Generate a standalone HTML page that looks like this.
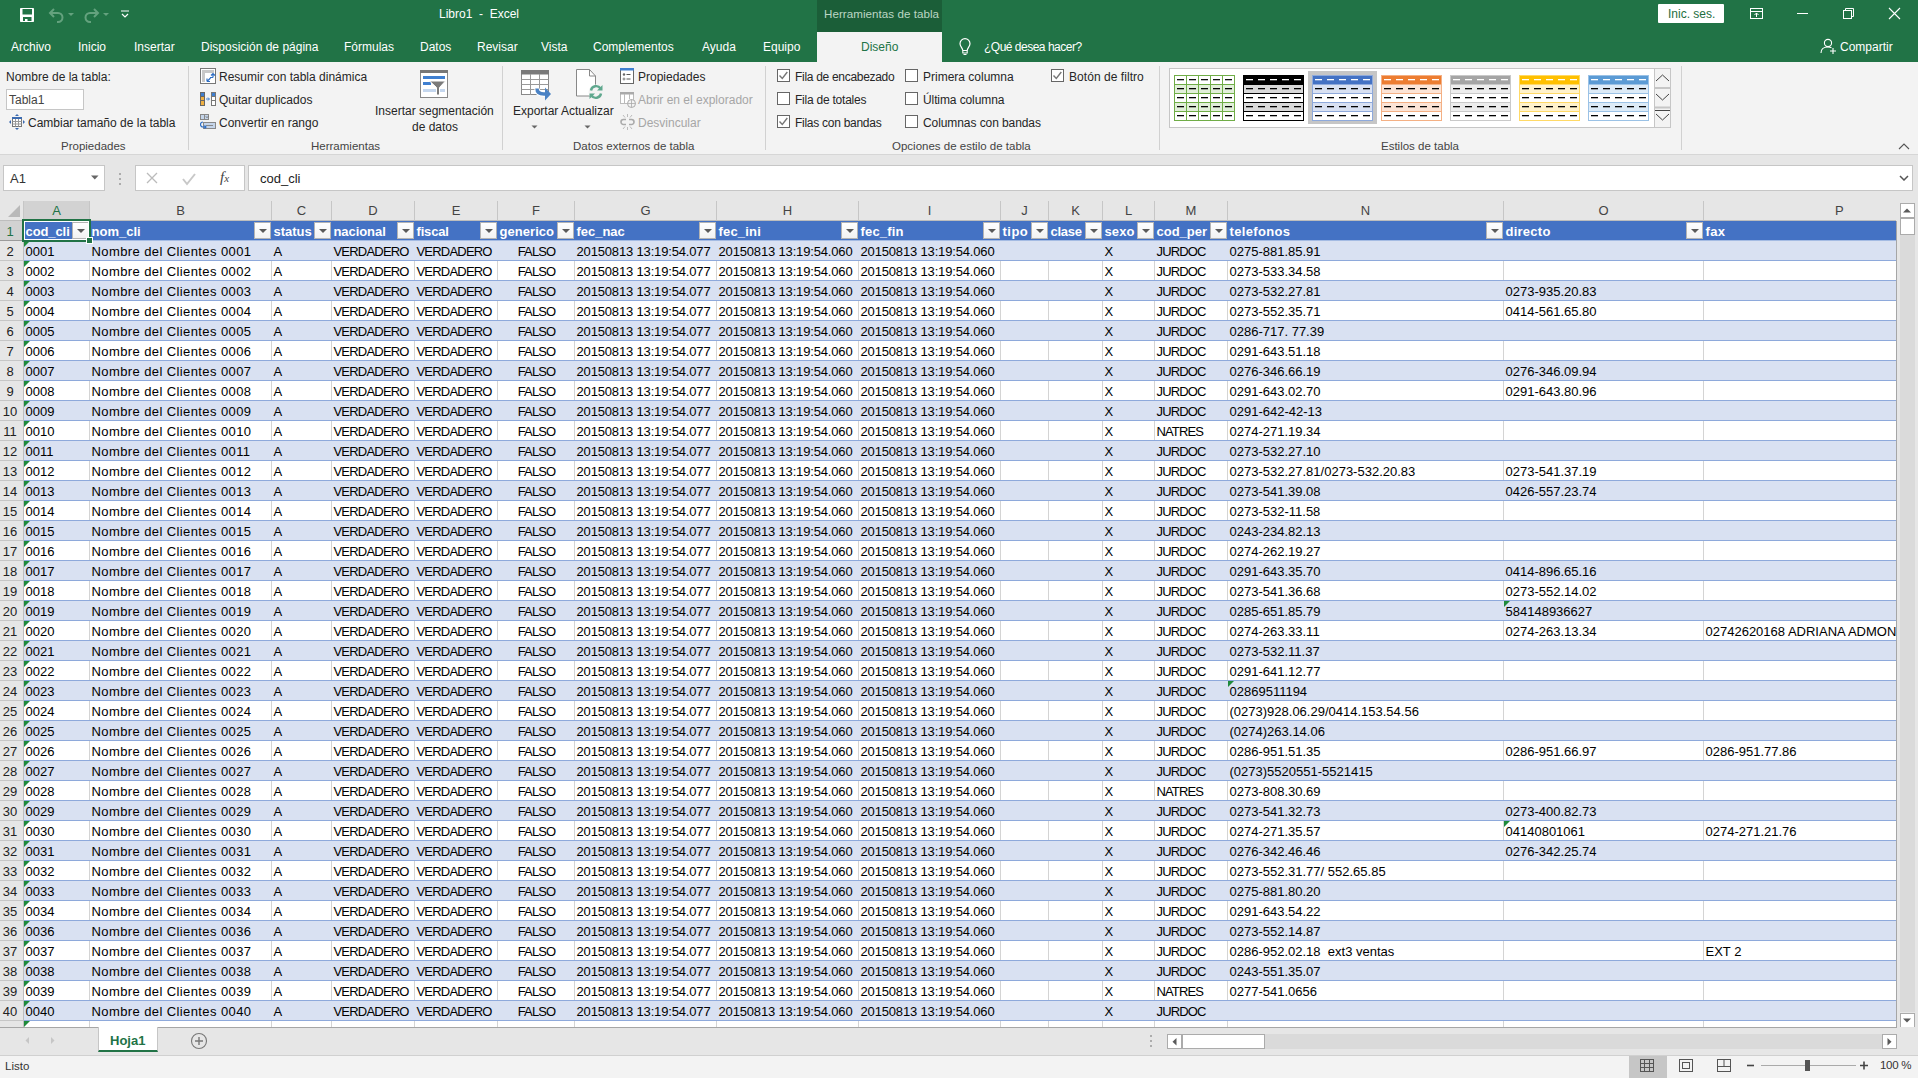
<!DOCTYPE html><html><head><meta charset="utf-8"><title>Libro1 - Excel</title><style>
*{box-sizing:border-box;margin:0;padding:0}
html,body{width:1918px;height:1078px;overflow:hidden;background:#fff;font-family:"Liberation Sans",sans-serif;position:relative}
.a{position:absolute;white-space:nowrap}
.t{font-size:12px;line-height:14px}
#title{left:0;top:0;width:1918px;height:62px;background:#217346}
.tab{color:#fff;top:40px}
#ribbon{left:0;top:62px;width:1918px;height:93px;background:#f3f3f3;border-bottom:1px solid #d6d6d6}
.rt{color:#262626}
.gl{color:#444;top:139px;font-size:11.5px}
.sep{width:1px;background:#d1d1d1;top:66px;height:84px}
#fbar{left:0;top:155px;width:1918px;height:46px;background:#e6e6e6}
#grid{left:0;top:201px;width:1918px;height:826px;background:#fff;overflow:hidden}
.ch{top:0;height:20px;background:#e6e6e6;border-right:1px solid #c6c6c6;color:#444;font-size:13px;line-height:20px;text-align:center;border-bottom:1px solid #bdbdbd}
.rh{left:0;width:24px;height:20px;background:#e6e6e6;border-bottom:1px solid #c6c6c6;border-right:1px solid #bdbdbd;color:#222;font-size:13px;line-height:22px;text-align:center;padding-right:3px}
.row{left:24px;width:1872px;height:20px;border-bottom:1px solid #8ea9db}
.b{background:#d9e1f2}
.w{background:#fff}
.gv{position:absolute;top:0;width:1px;height:19px;background:#d4d4d4}
.c{position:absolute;top:0;height:19px;font-size:13px;line-height:21px;color:#000;overflow:hidden;padding-left:1.5px}
.hd{background:#4472c4;border-bottom:1px solid #a4bbe3}
.hc{color:#fff;font-weight:bold}
.fb{position:absolute;top:1px;width:17px;height:17px;background:linear-gradient(#fff,#f2f2f2);border:1px solid #b4b4b4}
.fb:after{content:"";position:absolute;left:4px;top:6px;border-left:4px solid transparent;border-right:4px solid transparent;border-top:4px solid #5a5a5a}
.tri{position:absolute;left:0;top:0;width:0;height:0;border-top:6px solid #1f8a3b;border-right:6px solid transparent}
</style></head><body>
<div class="a" id="title"></div>
<div class="a" style="left:817px;top:0;width:125px;height:32px;background:#1b5e38"></div>
<div class="a t" style="left:824px;top:7px;color:#bcd6c4;font-size:11.6px;letter-spacing:0.05px">Herramientas de tabla</div>
<div class="a t" style="left:439px;top:7px;color:#fff">Libro1&nbsp; -&nbsp; Excel</div>
<svg class="a" style="left:20px;top:8px" width="14" height="14" viewBox="0 0 14 14"><rect x="0" y="0" width="14" height="14" rx="0.8" fill="#fff"/><rect x="2.5" y="1" width="9.5" height="5.5" fill="#217346"/><rect x="3" y="9" width="8.5" height="4" fill="#217346"/><rect x="5" y="11" width="2.5" height="2" fill="#fff"/></svg>
<svg class="a" style="left:48px;top:7px" width="36" height="16" viewBox="0 0 36 16"><path d="M3 6h7a4.5 4.5 0 0 1 0 9h-1" fill="none" stroke="#64a27e" stroke-width="2"/><path d="M6 2L2 6l4 4" stroke="#64a27e" stroke-width="2" fill="none"/><path d="M20 6l3 3 3-3z" fill="#64a27e"/></svg>
<svg class="a" style="left:83px;top:7px" width="36" height="16" viewBox="0 0 36 16"><path d="M14 6H7a4.5 4.5 0 0 0 0 9h1" fill="none" stroke="#64a27e" stroke-width="2"/><path d="M11 2l4 4-4 4" stroke="#64a27e" stroke-width="2" fill="none"/><path d="M20 6l3 3 3-3z" fill="#64a27e"/></svg>
<svg class="a" style="left:119px;top:8px" width="12" height="12" viewBox="0 0 12 12"><path d="M2 3h8" stroke="#fff" stroke-width="1"/><path d="M3 6l3 3 3-3" stroke="#fff" stroke-width="1.2" fill="none"/></svg>
<div class="a" style="left:1658px;top:4px;width:66px;height:19px;background:#fff;border-radius:1px"></div>
<div class="a t" style="left:1668px;top:7px;color:#1e6e40;font-size:12px">Inic. ses.</div>
<svg class="a" style="left:1748px;top:5px" width="170" height="18" viewBox="0 0 170 18"><rect x="2.5" y="3.5" width="12" height="10" fill="none" stroke="#fff"/><path d="M2.5 6.5h12" stroke="#fff"/><path d="M8.5 12V8M6.5 10l2-2 2 2" stroke="#fff" fill="none"/><path d="M49 8.5h11" stroke="#fff"/><rect x="95.5" y="5.5" width="8" height="8" fill="none" stroke="#fff"/><path d="M97.5 5.5v-2h8v8h-2" fill="none" stroke="#fff"/><path d="M141 3l11 11M152 3l-11 11" stroke="#fff" stroke-width="1.1"/></svg>
<div class="a t tab" style="left:11px">Archivo</div>
<div class="a t tab" style="left:78px">Inicio</div>
<div class="a t tab" style="left:134px">Insertar</div>
<div class="a t tab" style="left:201px">Disposición de página</div>
<div class="a t tab" style="left:344px">Fórmulas</div>
<div class="a t tab" style="left:420px">Datos</div>
<div class="a t tab" style="left:477px">Revisar</div>
<div class="a t tab" style="left:541px">Vista</div>
<div class="a t tab" style="left:593px">Complementos</div>
<div class="a t tab" style="left:702px">Ayuda</div>
<div class="a t tab" style="left:763px">Equipo</div>
<div class="a" style="left:817px;top:32px;width:125px;height:31px;background:#f3f3f3"></div>
<div class="a t" style="left:861px;top:40px;color:#217346">Diseño</div>
<svg class="a" style="left:957px;top:38px" width="16" height="18" viewBox="0 0 16 18"><path d="M5.8 12.5c0-2.5-2.8-4-2.8-6.8a5 5 0 0 1 10 0c0 2.8-2.8 4.3-2.8 6.8z" fill="none" stroke="#fff" stroke-width="1.2"/><path d="M5.8 13v2h4.4v-2M6.5 16.5h3" stroke="#fff" fill="none" stroke-width="1.1"/></svg>
<div class="a t tab" style="left:984px;letter-spacing:-0.5px">¿Qué desea hacer?</div>
<svg class="a" style="left:1820px;top:38px" width="18" height="16" viewBox="0 0 18 16"><circle cx="8" cy="5" r="3.6" fill="none" stroke="#fff" stroke-width="1.1"/><path d="M1 15c0-4 3-6 7-6 1.5 0 2.5 0.3 3.5 0.8" fill="none" stroke="#fff" stroke-width="1.1"/><path d="M13 10v6M10 13h6" stroke="#fff" stroke-width="1.1"/></svg>
<div class="a t tab" style="left:1840px">Compartir</div>
<div class="a" id="ribbon"></div>
<div class="a t rt" style="left:6px;top:70px">Nombre de la tabla:</div>
<div class="a" style="left:6px;top:89px;width:78px;height:21px;background:#fff;border:1px solid #c6c6c6"></div>
<div class="a t" style="left:9px;top:93px;color:#444">Tabla1</div>
<svg class="a" style="left:9px;top:114px" width="16" height="16" viewBox="0 0 16 16"><rect x="3.5" y="3.5" width="9" height="9" fill="#fff" stroke="#777"/><rect x="3" y="3" width="10" height="2" fill="#3c6bb0"/><path d="M3.5 7.5h9M3.5 10h9M6.5 5v7.5M9.5 5v7.5" stroke="#999"/><path d="M8 0l-2 2h4zM8 16l-2-2h4zM0 8l2-2v4zM16 8l-2-2v4z" fill="#3c6bb0"/></svg>
<div class="a t rt" style="left:28px;top:116px">Cambiar tamaño de la tabla</div>
<div class="a t gl" style="left:61px">Propiedades</div>
<div class="a sep" style="left:188px"></div>
<svg class="a" style="left:200px;top:68px" width="16" height="16" viewBox="0 0 16 16"><rect x="0.5" y="0.5" width="15" height="15" fill="#fff" stroke="#777"/><rect x="2" y="2" width="12" height="3" fill="#c8c8c8"/><rect x="2" y="2" width="3" height="12" fill="#c8c8c8"/><path d="M7 13.5h3M7 13.5v-3M7.5 13l3-3M13 5.5v4M11 7.5l2-2 2 2M10 9.5h3" stroke="#2f6fc4" stroke-width="1.2" fill="none"/></svg>
<div class="a t rt" style="left:219px;top:70px">Resumir con tabla dinámica</div>
<svg class="a" style="left:200px;top:92px" width="16" height="14" viewBox="0 0 16 14"><rect x="0" y="0" width="5" height="14" fill="#666"/><rect x="1" y="1" width="3" height="3" fill="#3f7fd0"/><rect x="1" y="5" width="3" height="3" fill="#f0b041"/><rect x="1" y="9" width="3" height="4" fill="#f0b041"/><rect x="11" y="0" width="5" height="14" fill="#777"/><rect x="12" y="1" width="3" height="3" fill="#3f7fd0"/><rect x="12" y="5" width="3" height="3" fill="#fff"/><rect x="12" y="9" width="3" height="4" fill="#fff"/><path d="M6 7h3M8 5.5l1.5 1.5L8 8.5" stroke="#3f7fd0" fill="none"/></svg>
<div class="a t rt" style="left:219px;top:93px">Quitar duplicados</div>
<svg class="a" style="left:200px;top:114px" width="16" height="16" viewBox="0 0 16 16"><rect x="0.5" y="0.5" width="8" height="5" fill="#c5d5ea" stroke="#888"/><path d="M4.5 0.5v5" stroke="#888"/><path d="M6 2.5l1 1 1-1" stroke="#555" fill="none"/><rect x="3.5" y="8.5" width="12" height="6" fill="#c5d5ea" stroke="#888"/><path d="M6 11.5h7" stroke="#888"/><path d="M3 8a2.5 2.5 0 0 0 0 5h3M4.5 11.5l1.5 1.5-1.5 1.5" stroke="#2f6fc4" stroke-width="1.2" fill="none"/></svg>
<div class="a t rt" style="left:219px;top:116px">Convertir en rango</div>
<svg class="a" style="left:420px;top:70px" width="28" height="28" viewBox="0 0 28 28"><rect x="0.5" y="0.5" width="27" height="27" fill="#fff" stroke="#888"/><rect x="0" y="0" width="28" height="3" fill="#777"/><rect x="3" y="6" width="22" height="3" fill="#3f7fd0"/><rect x="3" y="12" width="8" height="3" fill="#3f7fd0"/><rect x="3" y="19" width="22" height="3" fill="#c5d7ee"/><path d="M9.5 11h16l-6 6.5v7.5h-3v-7.5z" fill="#7a7a7a" stroke="#fff" stroke-width="1"/></svg>
<div class="a t rt" style="left:375px;top:104px">Insertar segmentación</div>
<div class="a t rt" style="left:412px;top:120px">de datos</div>
<div class="a t gl" style="left:311px">Herramientas</div>
<div class="a sep" style="left:502px"></div>
<svg class="a" style="left:520px;top:69px" width="34" height="34" viewBox="0 0 34 34"><rect x="1.5" y="1.5" width="27" height="24" fill="#fff" stroke="#888"/><rect x="1" y="1" width="28" height="4.5" fill="#7a7a7a"/><path d="M1.5 10.5h27M1.5 15.5h27M1.5 20.5h27M10.5 5v21M19.5 5v21" stroke="#999"/><path d="M17 19.5q0 5.5 7 5.5h2" stroke="#fff" stroke-width="5.5" fill="none"/><path d="M17 19.5q0 5.5 7 5.5h2" stroke="#4a82c4" stroke-width="3.5" fill="none"/><path d="M25 18.5l6 6.5-6 6.5z" fill="#4a82c4"/></svg>
<div class="a t rt" style="left:513px;top:104px">Exportar</div>
<svg class="a" style="left:531px;top:125px" width="7" height="4"><path d="M0.5 0.5h6L3.5 3.5z" fill="#666"/></svg>
<svg class="a" style="left:575px;top:68px" width="30" height="32" viewBox="0 0 30 32"><path d="M1.5 1.5h13l6 6.5v20h-19z" fill="#fff" stroke="#888"/><path d="M14.5 1.5v6.5h6" fill="none" stroke="#888"/><circle cx="21" cy="24" r="7.5" fill="#f3f3f3"/><path d="M16 22.5a5.2 5.2 0 0 1 9.5-2M26 25.5a5.2 5.2 0 0 1-9.5 2" stroke="#5fa88e" stroke-width="2.4" fill="none"/><path d="M27.5 17v5.5h-5.5zM14.5 31v-5.5h5.5z" fill="#5fa88e"/></svg>
<div class="a t rt" style="left:561px;top:104px">Actualizar</div>
<svg class="a" style="left:584px;top:125px" width="7" height="4"><path d="M0.5 0.5h6L3.5 3.5z" fill="#666"/></svg>
<svg class="a" style="left:620px;top:68px" width="14" height="16" viewBox="0 0 14 16"><rect x="0.5" y="0.5" width="13" height="15" fill="#fff" stroke="#666"/><rect x="0" y="0" width="14" height="2.5" fill="#3f7fd0"/><circle cx="4" cy="6.5" r="1.2" fill="#666"/><circle cx="4" cy="11" r="1" fill="none" stroke="#666" stroke-width="0.8"/><path d="M6.5 6.5h4M6.5 11h4" stroke="#555"/></svg>
<div class="a t rt" style="left:638px;top:70px">Propiedades</div>
<svg class="a" style="left:620px;top:92px" width="16" height="16" viewBox="0 0 16 16"><rect x="0.5" y="0.5" width="13" height="11" fill="#fff" stroke="#bbb"/><rect x="0" y="0" width="14" height="2.5" fill="#aaa"/><path d="M4.5 2v10M9.5 2v5" stroke="#bbb"/><circle cx="11.5" cy="11.5" r="4" fill="#f3f3f3" stroke="#aaa"/><path d="M7.5 11.5h8M11.5 7.5v8" stroke="#aaa" stroke-width="0.8"/></svg>
<div class="a t" style="left:638px;top:93px;color:#a6a6a6">Abrir en el explorador</div>
<svg class="a" style="left:620px;top:114px" width="16" height="16" viewBox="0 0 16 16"><path d="M6 5.5H3.5a2.5 2.5 0 0 0 0 5H6M9 5.5h2.5a2.5 2.5 0 0 1 0 5H9" stroke="#aaa" stroke-width="1.6" fill="none"/><path d="M7.5 0v3M7.5 13v3M3 1l2 2.5M12 1l-2 2.5M3 15l2-2.5M12 15l-2-2.5" stroke="#bbb"/></svg>
<div class="a t" style="left:638px;top:116px;color:#a6a6a6">Desvincular</div>
<div class="a t gl" style="left:573px">Datos externos de tabla</div>
<div class="a sep" style="left:765px"></div>
<svg class="a" style="left:777px;top:69px" width="13" height="13" viewBox="0 0 13 13"><rect x="0.5" y="0.5" width="12" height="12" fill="#fff" stroke="#666"/><path d="M2.5 6.5l2.8 3 5-6.5" stroke="#777" stroke-width="1.4" fill="none"/></svg>
<div class="a t rt" style="left:795px;top:70px;letter-spacing:-0.3px">Fila de encabezado</div>
<svg class="a" style="left:777px;top:92px" width="13" height="13" viewBox="0 0 13 13"><rect x="0.5" y="0.5" width="12" height="12" fill="#fff" stroke="#666"/></svg>
<div class="a t rt" style="left:795px;top:93px;letter-spacing:-0.23px">Fila de totales</div>
<svg class="a" style="left:777px;top:115px" width="13" height="13" viewBox="0 0 13 13"><rect x="0.5" y="0.5" width="12" height="12" fill="#fff" stroke="#666"/><path d="M2.5 6.5l2.8 3 5-6.5" stroke="#777" stroke-width="1.4" fill="none"/></svg>
<div class="a t rt" style="left:795px;top:116px;letter-spacing:-0.27px">Filas con bandas</div>
<svg class="a" style="left:905px;top:69px" width="13" height="13" viewBox="0 0 13 13"><rect x="0.5" y="0.5" width="12" height="12" fill="#fff" stroke="#666"/></svg>
<div class="a t rt" style="left:923px;top:70px;letter-spacing:0px">Primera columna</div>
<svg class="a" style="left:905px;top:92px" width="13" height="13" viewBox="0 0 13 13"><rect x="0.5" y="0.5" width="12" height="12" fill="#fff" stroke="#666"/></svg>
<div class="a t rt" style="left:923px;top:93px;letter-spacing:-0.1px">Última columna</div>
<svg class="a" style="left:905px;top:115px" width="13" height="13" viewBox="0 0 13 13"><rect x="0.5" y="0.5" width="12" height="12" fill="#fff" stroke="#666"/></svg>
<div class="a t rt" style="left:923px;top:116px;letter-spacing:-0.08px">Columnas con bandas</div>
<svg class="a" style="left:1051px;top:69px" width="13" height="13" viewBox="0 0 13 13"><rect x="0.5" y="0.5" width="12" height="12" fill="#fff" stroke="#666"/><path d="M2.5 6.5l2.8 3 5-6.5" stroke="#777" stroke-width="1.4" fill="none"/></svg>
<div class="a t rt" style="left:1069px;top:70px;letter-spacing:0.05px">Botón de filtro</div>
<div class="a t gl" style="left:892px">Opciones de estilo de tabla</div>
<div class="a sep" style="left:1159px"></div>
<div class="a" style="left:1169px;top:68px;width:486px;height:60px;background:#fff;border:1px solid #c6c6c6"></div>
<div class="a" style="left:1308px;top:71px;width:69px;height:53px;background:#c6c6c6"></div>
<svg class="a" style="left:1174px;top:75px" width="62" height="46" viewBox="0 0 62 46"><rect x="0" y="0" width="61" height="46" fill="#fff"/><rect x="0" y="0" width="61" height="10" fill="#fff"/><path d="M0 0.5h61" stroke="#70ad47"/><rect x="3" y="4" width="7" height="1.3" fill="#111"/><rect x="15" y="4" width="7" height="1.3" fill="#111"/><rect x="27" y="4" width="7" height="1.3" fill="#111"/><rect x="39" y="4" width="7" height="1.3" fill="#111"/><rect x="51" y="4" width="7" height="1.3" fill="#111"/><rect x="0" y="9" width="61" height="10" fill="#e2efda"/><path d="M0 9.5h61" stroke="#70ad47"/><rect x="3" y="13" width="7" height="1.3" fill="#000"/><rect x="15" y="13" width="7" height="1.3" fill="#000"/><rect x="27" y="13" width="7" height="1.3" fill="#000"/><rect x="39" y="13" width="7" height="1.3" fill="#000"/><rect x="51" y="13" width="7" height="1.3" fill="#000"/><rect x="0" y="18" width="61" height="10" fill="#fff"/><path d="M0 18.5h61" stroke="#70ad47"/><rect x="3" y="22" width="7" height="1.3" fill="#000"/><rect x="15" y="22" width="7" height="1.3" fill="#000"/><rect x="27" y="22" width="7" height="1.3" fill="#000"/><rect x="39" y="22" width="7" height="1.3" fill="#000"/><rect x="51" y="22" width="7" height="1.3" fill="#000"/><rect x="0" y="27" width="61" height="10" fill="#e2efda"/><path d="M0 27.5h61" stroke="#70ad47"/><rect x="3" y="31" width="7" height="1.3" fill="#000"/><rect x="15" y="31" width="7" height="1.3" fill="#000"/><rect x="27" y="31" width="7" height="1.3" fill="#000"/><rect x="39" y="31" width="7" height="1.3" fill="#000"/><rect x="51" y="31" width="7" height="1.3" fill="#000"/><rect x="0" y="36" width="61" height="10" fill="#fff"/><path d="M0 36.5h61" stroke="#70ad47"/><rect x="3" y="40" width="7" height="1.3" fill="#000"/><rect x="15" y="40" width="7" height="1.3" fill="#000"/><rect x="27" y="40" width="7" height="1.3" fill="#000"/><rect x="39" y="40" width="7" height="1.3" fill="#000"/><rect x="51" y="40" width="7" height="1.3" fill="#000"/><path d="M12.5 0v45" stroke="#70ad47"/><path d="M24.5 0v45" stroke="#70ad47"/><path d="M36.5 0v45" stroke="#70ad47"/><path d="M48.5 0v45" stroke="#70ad47"/><rect x="0.5" y="0.5" width="60" height="45" fill="none" stroke="#70ad47"/></svg>
<svg class="a" style="left:1243px;top:75px" width="62" height="46" viewBox="0 0 62 46"><rect x="0" y="0" width="61" height="46" fill="#fff"/><rect x="0" y="0" width="61" height="10" fill="#000"/><path d="M0 0.5h61" stroke="#000"/><rect x="3" y="4" width="7" height="1.3" fill="#fff"/><rect x="15" y="4" width="7" height="1.3" fill="#fff"/><rect x="27" y="4" width="7" height="1.3" fill="#fff"/><rect x="39" y="4" width="7" height="1.3" fill="#fff"/><rect x="51" y="4" width="7" height="1.3" fill="#fff"/><rect x="0" y="9" width="61" height="10" fill="#d9d9d9"/><path d="M0 9.5h61" stroke="#000"/><rect x="3" y="13" width="7" height="1.3" fill="#000"/><rect x="15" y="13" width="7" height="1.3" fill="#000"/><rect x="27" y="13" width="7" height="1.3" fill="#000"/><rect x="39" y="13" width="7" height="1.3" fill="#000"/><rect x="51" y="13" width="7" height="1.3" fill="#000"/><rect x="0" y="18" width="61" height="10" fill="#fff"/><path d="M0 18.5h61" stroke="#000"/><rect x="3" y="22" width="7" height="1.3" fill="#000"/><rect x="15" y="22" width="7" height="1.3" fill="#000"/><rect x="27" y="22" width="7" height="1.3" fill="#000"/><rect x="39" y="22" width="7" height="1.3" fill="#000"/><rect x="51" y="22" width="7" height="1.3" fill="#000"/><rect x="0" y="27" width="61" height="10" fill="#d9d9d9"/><path d="M0 27.5h61" stroke="#000"/><rect x="3" y="31" width="7" height="1.3" fill="#000"/><rect x="15" y="31" width="7" height="1.3" fill="#000"/><rect x="27" y="31" width="7" height="1.3" fill="#000"/><rect x="39" y="31" width="7" height="1.3" fill="#000"/><rect x="51" y="31" width="7" height="1.3" fill="#000"/><rect x="0" y="36" width="61" height="10" fill="#fff"/><path d="M0 36.5h61" stroke="#000"/><rect x="3" y="40" width="7" height="1.3" fill="#000"/><rect x="15" y="40" width="7" height="1.3" fill="#000"/><rect x="27" y="40" width="7" height="1.3" fill="#000"/><rect x="39" y="40" width="7" height="1.3" fill="#000"/><rect x="51" y="40" width="7" height="1.3" fill="#000"/><rect x="0.5" y="0.5" width="60" height="45" fill="none" stroke="#000"/></svg>
<svg class="a" style="left:1312px;top:75px" width="62" height="46" viewBox="0 0 62 46"><rect x="0" y="0" width="61" height="46" fill="#fff"/><rect x="0" y="0" width="61" height="10" fill="#4472c4"/><path d="M0 0.5h61" stroke="#8ea9db"/><rect x="3" y="4" width="7" height="1.3" fill="#fff"/><rect x="15" y="4" width="7" height="1.3" fill="#fff"/><rect x="27" y="4" width="7" height="1.3" fill="#fff"/><rect x="39" y="4" width="7" height="1.3" fill="#fff"/><rect x="51" y="4" width="7" height="1.3" fill="#fff"/><rect x="0" y="9" width="61" height="10" fill="#d9e1f2"/><path d="M0 9.5h61" stroke="#8ea9db"/><rect x="3" y="13" width="7" height="1.3" fill="#000"/><rect x="15" y="13" width="7" height="1.3" fill="#000"/><rect x="27" y="13" width="7" height="1.3" fill="#000"/><rect x="39" y="13" width="7" height="1.3" fill="#000"/><rect x="51" y="13" width="7" height="1.3" fill="#000"/><rect x="0" y="18" width="61" height="10" fill="#fff"/><path d="M0 18.5h61" stroke="#8ea9db"/><rect x="3" y="22" width="7" height="1.3" fill="#000"/><rect x="15" y="22" width="7" height="1.3" fill="#000"/><rect x="27" y="22" width="7" height="1.3" fill="#000"/><rect x="39" y="22" width="7" height="1.3" fill="#000"/><rect x="51" y="22" width="7" height="1.3" fill="#000"/><rect x="0" y="27" width="61" height="10" fill="#d9e1f2"/><path d="M0 27.5h61" stroke="#8ea9db"/><rect x="3" y="31" width="7" height="1.3" fill="#000"/><rect x="15" y="31" width="7" height="1.3" fill="#000"/><rect x="27" y="31" width="7" height="1.3" fill="#000"/><rect x="39" y="31" width="7" height="1.3" fill="#000"/><rect x="51" y="31" width="7" height="1.3" fill="#000"/><rect x="0" y="36" width="61" height="10" fill="#fff"/><path d="M0 36.5h61" stroke="#8ea9db"/><rect x="3" y="40" width="7" height="1.3" fill="#000"/><rect x="15" y="40" width="7" height="1.3" fill="#000"/><rect x="27" y="40" width="7" height="1.3" fill="#000"/><rect x="39" y="40" width="7" height="1.3" fill="#000"/><rect x="51" y="40" width="7" height="1.3" fill="#000"/><rect x="0.5" y="0.5" width="60" height="45" fill="none" stroke="#8ea9db"/></svg>
<svg class="a" style="left:1381px;top:75px" width="62" height="46" viewBox="0 0 62 46"><rect x="0" y="0" width="61" height="46" fill="#fff"/><rect x="0" y="0" width="61" height="10" fill="#ed7d31"/><path d="M0 0.5h61" stroke="#f4b084"/><rect x="3" y="4" width="7" height="1.3" fill="#fff"/><rect x="15" y="4" width="7" height="1.3" fill="#fff"/><rect x="27" y="4" width="7" height="1.3" fill="#fff"/><rect x="39" y="4" width="7" height="1.3" fill="#fff"/><rect x="51" y="4" width="7" height="1.3" fill="#fff"/><rect x="0" y="9" width="61" height="10" fill="#fce4d6"/><path d="M0 9.5h61" stroke="#f4b084"/><rect x="3" y="13" width="7" height="1.3" fill="#000"/><rect x="15" y="13" width="7" height="1.3" fill="#000"/><rect x="27" y="13" width="7" height="1.3" fill="#000"/><rect x="39" y="13" width="7" height="1.3" fill="#000"/><rect x="51" y="13" width="7" height="1.3" fill="#000"/><rect x="0" y="18" width="61" height="10" fill="#fff"/><path d="M0 18.5h61" stroke="#f4b084"/><rect x="3" y="22" width="7" height="1.3" fill="#000"/><rect x="15" y="22" width="7" height="1.3" fill="#000"/><rect x="27" y="22" width="7" height="1.3" fill="#000"/><rect x="39" y="22" width="7" height="1.3" fill="#000"/><rect x="51" y="22" width="7" height="1.3" fill="#000"/><rect x="0" y="27" width="61" height="10" fill="#fce4d6"/><path d="M0 27.5h61" stroke="#f4b084"/><rect x="3" y="31" width="7" height="1.3" fill="#000"/><rect x="15" y="31" width="7" height="1.3" fill="#000"/><rect x="27" y="31" width="7" height="1.3" fill="#000"/><rect x="39" y="31" width="7" height="1.3" fill="#000"/><rect x="51" y="31" width="7" height="1.3" fill="#000"/><rect x="0" y="36" width="61" height="10" fill="#fff"/><path d="M0 36.5h61" stroke="#f4b084"/><rect x="3" y="40" width="7" height="1.3" fill="#000"/><rect x="15" y="40" width="7" height="1.3" fill="#000"/><rect x="27" y="40" width="7" height="1.3" fill="#000"/><rect x="39" y="40" width="7" height="1.3" fill="#000"/><rect x="51" y="40" width="7" height="1.3" fill="#000"/><rect x="0.5" y="0.5" width="60" height="45" fill="none" stroke="#f4b084"/></svg>
<svg class="a" style="left:1450px;top:75px" width="62" height="46" viewBox="0 0 62 46"><rect x="0" y="0" width="61" height="46" fill="#fff"/><rect x="0" y="0" width="61" height="10" fill="#a5a5a5"/><path d="M0 0.5h61" stroke="#c9c9c9"/><rect x="3" y="4" width="7" height="1.3" fill="#fff"/><rect x="15" y="4" width="7" height="1.3" fill="#fff"/><rect x="27" y="4" width="7" height="1.3" fill="#fff"/><rect x="39" y="4" width="7" height="1.3" fill="#fff"/><rect x="51" y="4" width="7" height="1.3" fill="#fff"/><rect x="0" y="9" width="61" height="10" fill="#ededed"/><path d="M0 9.5h61" stroke="#c9c9c9"/><rect x="3" y="13" width="7" height="1.3" fill="#000"/><rect x="15" y="13" width="7" height="1.3" fill="#000"/><rect x="27" y="13" width="7" height="1.3" fill="#000"/><rect x="39" y="13" width="7" height="1.3" fill="#000"/><rect x="51" y="13" width="7" height="1.3" fill="#000"/><rect x="0" y="18" width="61" height="10" fill="#fff"/><path d="M0 18.5h61" stroke="#c9c9c9"/><rect x="3" y="22" width="7" height="1.3" fill="#000"/><rect x="15" y="22" width="7" height="1.3" fill="#000"/><rect x="27" y="22" width="7" height="1.3" fill="#000"/><rect x="39" y="22" width="7" height="1.3" fill="#000"/><rect x="51" y="22" width="7" height="1.3" fill="#000"/><rect x="0" y="27" width="61" height="10" fill="#ededed"/><path d="M0 27.5h61" stroke="#c9c9c9"/><rect x="3" y="31" width="7" height="1.3" fill="#000"/><rect x="15" y="31" width="7" height="1.3" fill="#000"/><rect x="27" y="31" width="7" height="1.3" fill="#000"/><rect x="39" y="31" width="7" height="1.3" fill="#000"/><rect x="51" y="31" width="7" height="1.3" fill="#000"/><rect x="0" y="36" width="61" height="10" fill="#fff"/><path d="M0 36.5h61" stroke="#c9c9c9"/><rect x="3" y="40" width="7" height="1.3" fill="#000"/><rect x="15" y="40" width="7" height="1.3" fill="#000"/><rect x="27" y="40" width="7" height="1.3" fill="#000"/><rect x="39" y="40" width="7" height="1.3" fill="#000"/><rect x="51" y="40" width="7" height="1.3" fill="#000"/><rect x="0.5" y="0.5" width="60" height="45" fill="none" stroke="#c9c9c9"/></svg>
<svg class="a" style="left:1519px;top:75px" width="62" height="46" viewBox="0 0 62 46"><rect x="0" y="0" width="61" height="46" fill="#fff"/><rect x="0" y="0" width="61" height="10" fill="#ffc000"/><path d="M0 0.5h61" stroke="#ffd966"/><rect x="3" y="4" width="7" height="1.3" fill="#fff"/><rect x="15" y="4" width="7" height="1.3" fill="#fff"/><rect x="27" y="4" width="7" height="1.3" fill="#fff"/><rect x="39" y="4" width="7" height="1.3" fill="#fff"/><rect x="51" y="4" width="7" height="1.3" fill="#fff"/><rect x="0" y="9" width="61" height="10" fill="#fff2cc"/><path d="M0 9.5h61" stroke="#ffd966"/><rect x="3" y="13" width="7" height="1.3" fill="#000"/><rect x="15" y="13" width="7" height="1.3" fill="#000"/><rect x="27" y="13" width="7" height="1.3" fill="#000"/><rect x="39" y="13" width="7" height="1.3" fill="#000"/><rect x="51" y="13" width="7" height="1.3" fill="#000"/><rect x="0" y="18" width="61" height="10" fill="#fff"/><path d="M0 18.5h61" stroke="#ffd966"/><rect x="3" y="22" width="7" height="1.3" fill="#000"/><rect x="15" y="22" width="7" height="1.3" fill="#000"/><rect x="27" y="22" width="7" height="1.3" fill="#000"/><rect x="39" y="22" width="7" height="1.3" fill="#000"/><rect x="51" y="22" width="7" height="1.3" fill="#000"/><rect x="0" y="27" width="61" height="10" fill="#fff2cc"/><path d="M0 27.5h61" stroke="#ffd966"/><rect x="3" y="31" width="7" height="1.3" fill="#000"/><rect x="15" y="31" width="7" height="1.3" fill="#000"/><rect x="27" y="31" width="7" height="1.3" fill="#000"/><rect x="39" y="31" width="7" height="1.3" fill="#000"/><rect x="51" y="31" width="7" height="1.3" fill="#000"/><rect x="0" y="36" width="61" height="10" fill="#fff"/><path d="M0 36.5h61" stroke="#ffd966"/><rect x="3" y="40" width="7" height="1.3" fill="#000"/><rect x="15" y="40" width="7" height="1.3" fill="#000"/><rect x="27" y="40" width="7" height="1.3" fill="#000"/><rect x="39" y="40" width="7" height="1.3" fill="#000"/><rect x="51" y="40" width="7" height="1.3" fill="#000"/><rect x="0.5" y="0.5" width="60" height="45" fill="none" stroke="#ffd966"/></svg>
<svg class="a" style="left:1588px;top:75px" width="62" height="46" viewBox="0 0 62 46"><rect x="0" y="0" width="61" height="46" fill="#fff"/><rect x="0" y="0" width="61" height="10" fill="#5b9bd5"/><path d="M0 0.5h61" stroke="#9bc2e6"/><rect x="3" y="4" width="7" height="1.3" fill="#fff"/><rect x="15" y="4" width="7" height="1.3" fill="#fff"/><rect x="27" y="4" width="7" height="1.3" fill="#fff"/><rect x="39" y="4" width="7" height="1.3" fill="#fff"/><rect x="51" y="4" width="7" height="1.3" fill="#fff"/><rect x="0" y="9" width="61" height="10" fill="#ddebf7"/><path d="M0 9.5h61" stroke="#9bc2e6"/><rect x="3" y="13" width="7" height="1.3" fill="#000"/><rect x="15" y="13" width="7" height="1.3" fill="#000"/><rect x="27" y="13" width="7" height="1.3" fill="#000"/><rect x="39" y="13" width="7" height="1.3" fill="#000"/><rect x="51" y="13" width="7" height="1.3" fill="#000"/><rect x="0" y="18" width="61" height="10" fill="#fff"/><path d="M0 18.5h61" stroke="#9bc2e6"/><rect x="3" y="22" width="7" height="1.3" fill="#000"/><rect x="15" y="22" width="7" height="1.3" fill="#000"/><rect x="27" y="22" width="7" height="1.3" fill="#000"/><rect x="39" y="22" width="7" height="1.3" fill="#000"/><rect x="51" y="22" width="7" height="1.3" fill="#000"/><rect x="0" y="27" width="61" height="10" fill="#ddebf7"/><path d="M0 27.5h61" stroke="#9bc2e6"/><rect x="3" y="31" width="7" height="1.3" fill="#000"/><rect x="15" y="31" width="7" height="1.3" fill="#000"/><rect x="27" y="31" width="7" height="1.3" fill="#000"/><rect x="39" y="31" width="7" height="1.3" fill="#000"/><rect x="51" y="31" width="7" height="1.3" fill="#000"/><rect x="0" y="36" width="61" height="10" fill="#fff"/><path d="M0 36.5h61" stroke="#9bc2e6"/><rect x="3" y="40" width="7" height="1.3" fill="#000"/><rect x="15" y="40" width="7" height="1.3" fill="#000"/><rect x="27" y="40" width="7" height="1.3" fill="#000"/><rect x="39" y="40" width="7" height="1.3" fill="#000"/><rect x="51" y="40" width="7" height="1.3" fill="#000"/><rect x="0.5" y="0.5" width="60" height="45" fill="none" stroke="#9bc2e6"/></svg>
<svg class="a" style="left:1654px;top:68px" width="18" height="60" viewBox="0 0 18 60"><rect x="0.5" y="0.5" width="16" height="59" fill="#f3f3f3" stroke="#c6c6c6"/><path d="M0 20h17M0 39.5h17" stroke="#c6c6c6" stroke-width="2"/><path d="M2 13l6.5-6 6.5 6M2 26l6.5 6 6.5-6M2 46l6.5 6 6.5-6" stroke="#444" fill="none" stroke-width="1"/><path d="M1 42.5h15" stroke="#444"/></svg>
<div class="a t gl" style="left:1381px">Estilos de tabla</div>
<div class="a sep" style="left:1681px"></div>
<svg class="a" style="left:1898px;top:142px" width="12" height="8" viewBox="0 0 12 8"><path d="M1 7l5-5 5 5" stroke="#555" fill="none" stroke-width="1.1"/></svg>
<div class="a" id="fbar"></div>
<div class="a" style="left:3px;top:165px;width:102px;height:26px;background:#fff;border:1px solid #c6c6c6"></div>
<div class="a" style="left:10px;top:171px;font-size:13px;line-height:15px;color:#333">A1</div>
<svg class="a" style="left:91px;top:175px" width="8" height="5"><path d="M0 0.5h7.5L3.75 4.5z" fill="#666"/></svg>
<svg class="a" style="left:118px;top:171px" width="4" height="16"><circle cx="2" cy="3" r="1" fill="#999"/><circle cx="2" cy="8" r="1" fill="#999"/><circle cx="2" cy="13" r="1" fill="#999"/></svg>
<div class="a" style="left:135px;top:165px;width:110px;height:26px;background:#fff;border:1px solid #c6c6c6"></div>
<svg class="a" style="left:146px;top:171px" width="95" height="16" viewBox="0 0 95 16"><path d="M1 2l10 10M11 2L1 12" stroke="#bbb" stroke-width="1.3"/><path d="M37 8l4 5 8-10" stroke="#c8c8c8" stroke-width="2" fill="none"/></svg>
<div class="a" style="left:220px;top:168px;font-family:'Liberation Serif',serif;font-style:italic;font-size:15px;line-height:18px;color:#444">f<span style="font-size:11px">x</span></div>
<div class="a" style="left:248px;top:165px;width:1665px;height:26px;background:#fff;border:1px solid #c6c6c6"></div>
<div class="a" style="left:260px;top:171px;font-size:13px;line-height:15px;color:#222">cod_cli</div>
<svg class="a" style="left:1899px;top:175px" width="10" height="6" viewBox="0 0 10 6"><path d="M1 1l4 4 4-4" stroke="#555" fill="none" stroke-width="1.5"/></svg>
<div class="a" id="grid">
<div class="a" style="left:0;top:0;width:24px;height:20px;background:#e6e6e6;border-bottom:1px solid #bdbdbd;border-right:1px solid #c6c6c6"></div>
<svg class="a" style="left:8px;top:4px" width="12" height="12"><path d="M12 0v12H0z" fill="#b9b9b9"/></svg>
<div class="a ch" style="left:24px;width:66px;background:#d2d2d2;color:#217346;">A</div>
<div class="a ch" style="left:90px;width:182px;">B</div>
<div class="a ch" style="left:272px;width:60px;">C</div>
<div class="a ch" style="left:332px;width:83px;">D</div>
<div class="a ch" style="left:415px;width:83px;">E</div>
<div class="a ch" style="left:498px;width:77px;">F</div>
<div class="a ch" style="left:575px;width:142px;">G</div>
<div class="a ch" style="left:717px;width:142px;">H</div>
<div class="a ch" style="left:859px;width:142px;">I</div>
<div class="a ch" style="left:1001px;width:48px;">J</div>
<div class="a ch" style="left:1049px;width:54px;">K</div>
<div class="a ch" style="left:1103px;width:52px;">L</div>
<div class="a ch" style="left:1155px;width:73px;">M</div>
<div class="a ch" style="left:1228px;width:276px;">N</div>
<div class="a ch" style="left:1504px;width:200px;">O</div>
<div class="a ch" style="left:1704px;width:193px;"><span style="position:absolute;left:131px">P</span></div>
<div class="a" style="left:1896px;top:0;width:22px;height:826px;background:#e6e6e6"></div>
<div class="a rh" style="top:20px;background:#d2d2d2;color:#217346;border-bottom:1px solid #9b9b9b;">1</div>
<div class="a rh" style="top:40px;">2</div>
<div class="a rh" style="top:60px;">3</div>
<div class="a rh" style="top:80px;">4</div>
<div class="a rh" style="top:100px;">5</div>
<div class="a rh" style="top:120px;">6</div>
<div class="a rh" style="top:140px;">7</div>
<div class="a rh" style="top:160px;">8</div>
<div class="a rh" style="top:180px;">9</div>
<div class="a rh" style="top:200px;">10</div>
<div class="a rh" style="top:220px;">11</div>
<div class="a rh" style="top:240px;">12</div>
<div class="a rh" style="top:260px;">13</div>
<div class="a rh" style="top:280px;">14</div>
<div class="a rh" style="top:300px;">15</div>
<div class="a rh" style="top:320px;">16</div>
<div class="a rh" style="top:340px;">17</div>
<div class="a rh" style="top:360px;">18</div>
<div class="a rh" style="top:380px;">19</div>
<div class="a rh" style="top:400px;">20</div>
<div class="a rh" style="top:420px;">21</div>
<div class="a rh" style="top:440px;">22</div>
<div class="a rh" style="top:460px;">23</div>
<div class="a rh" style="top:480px;">24</div>
<div class="a rh" style="top:500px;">25</div>
<div class="a rh" style="top:520px;">26</div>
<div class="a rh" style="top:540px;">27</div>
<div class="a rh" style="top:560px;">28</div>
<div class="a rh" style="top:580px;">29</div>
<div class="a rh" style="top:600px;">30</div>
<div class="a rh" style="top:620px;">31</div>
<div class="a rh" style="top:640px;">32</div>
<div class="a rh" style="top:660px;">33</div>
<div class="a rh" style="top:680px;">34</div>
<div class="a rh" style="top:700px;">35</div>
<div class="a rh" style="top:720px;">36</div>
<div class="a rh" style="top:740px;">37</div>
<div class="a rh" style="top:760px;">38</div>
<div class="a rh" style="top:780px;">39</div>
<div class="a rh" style="top:800px;">40</div>
<div class="a rh" style="top:820px;">41</div>
<div class="a row hd" style="top:20px">
<div class="c hc" style="left:0px;width:66px;letter-spacing:-0.09px">cod_cli</div>
<div class="fb" style="left:48px"></div>
<div class="c hc" style="left:66px;width:182px;letter-spacing:0.01px">nom_cli</div>
<div class="fb" style="left:230px"></div>
<div class="c hc" style="left:248px;width:60px;letter-spacing:-0.02px">status</div>
<div class="fb" style="left:290px"></div>
<div class="c hc" style="left:308px;width:83px;letter-spacing:-0.07px">nacional</div>
<div class="fb" style="left:373px"></div>
<div class="c hc" style="left:391px;width:83px;letter-spacing:-0.17px">fiscal</div>
<div class="fb" style="left:456px"></div>
<div class="c hc" style="left:474px;width:77px;letter-spacing:0.05px">generico</div>
<div class="fb" style="left:533px"></div>
<div class="c hc" style="left:551px;width:142px;letter-spacing:-0.03px">fec_nac</div>
<div class="fb" style="left:675px"></div>
<div class="c hc" style="left:693px;width:142px;letter-spacing:0.19px">fec_ini</div>
<div class="fb" style="left:817px"></div>
<div class="c hc" style="left:835px;width:142px;letter-spacing:0.18px">fec_fin</div>
<div class="fb" style="left:959px"></div>
<div class="c hc" style="left:977px;width:48px;letter-spacing:0.49px">tipo</div>
<div class="fb" style="left:1007px"></div>
<div class="c hc" style="left:1025px;width:54px;letter-spacing:-0.27px">clase</div>
<div class="fb" style="left:1061px"></div>
<div class="c hc" style="left:1079px;width:52px;letter-spacing:0.14px">sexo</div>
<div class="fb" style="left:1113px"></div>
<div class="c hc" style="left:1131px;width:73px;letter-spacing:-0.01px">cod_per</div>
<div class="fb" style="left:1186px"></div>
<div class="c hc" style="left:1204px;width:276px;letter-spacing:0.34px">telefonos</div>
<div class="fb" style="left:1462px"></div>
<div class="c hc" style="left:1480px;width:200px;letter-spacing:0.25px">directo</div>
<div class="fb" style="left:1662px"></div>
<div class="c hc" style="left:1680px;width:193px;letter-spacing:0.37px">fax</div>
</div>
<div class="a row b" style="top:40px">
<div class="c" style="left:0px;width:66px;letter-spacing:0px;">0001</div>
<div class="c" style="left:66px;width:182px;letter-spacing:0.4px;">Nombre del Clientes 0001</div>
<div class="c" style="left:248px;width:60px;letter-spacing:0px;">A</div>
<div class="c" style="left:308px;width:83px;letter-spacing:-0.8px;">VERDADERO</div>
<div class="c" style="left:391px;width:83px;letter-spacing:-0.8px;">VERDADERO</div>
<div class="c" style="left:474px;width:77px;letter-spacing:-0.9px;text-align:center;padding-left:0;">FALSO</div>
<div class="c" style="left:551px;width:142px;letter-spacing:-0.16px;">20150813 13:19:54.077</div>
<div class="c" style="left:693px;width:142px;letter-spacing:-0.16px;">20150813 13:19:54.060</div>
<div class="c" style="left:835px;width:142px;letter-spacing:-0.16px;">20150813 13:19:54.060</div>
<div class="c" style="left:1079px;width:52px;letter-spacing:0px;">X</div>
<div class="c" style="left:1131px;width:73px;letter-spacing:-0.87px;">JURDOC</div>
<div class="c" style="left:1204px;width:276px;letter-spacing:0px;">0275-881.85.91</div>
<div class="tri" style="left:0"></div>
</div>
<div class="a row w" style="top:60px">
<div class="gv" style="left:65px"></div>
<div class="gv" style="left:247px"></div>
<div class="gv" style="left:307px"></div>
<div class="gv" style="left:390px"></div>
<div class="gv" style="left:473px"></div>
<div class="gv" style="left:550px"></div>
<div class="gv" style="left:692px"></div>
<div class="gv" style="left:834px"></div>
<div class="gv" style="left:976px"></div>
<div class="gv" style="left:1024px"></div>
<div class="gv" style="left:1078px"></div>
<div class="gv" style="left:1130px"></div>
<div class="gv" style="left:1203px"></div>
<div class="gv" style="left:1479px"></div>
<div class="gv" style="left:1679px"></div>
<div class="c" style="left:0px;width:66px;letter-spacing:0px;">0002</div>
<div class="c" style="left:66px;width:182px;letter-spacing:0.4px;">Nombre del Clientes 0002</div>
<div class="c" style="left:248px;width:60px;letter-spacing:0px;">A</div>
<div class="c" style="left:308px;width:83px;letter-spacing:-0.8px;">VERDADERO</div>
<div class="c" style="left:391px;width:83px;letter-spacing:-0.8px;">VERDADERO</div>
<div class="c" style="left:474px;width:77px;letter-spacing:-0.9px;text-align:center;padding-left:0;">FALSO</div>
<div class="c" style="left:551px;width:142px;letter-spacing:-0.16px;">20150813 13:19:54.077</div>
<div class="c" style="left:693px;width:142px;letter-spacing:-0.16px;">20150813 13:19:54.060</div>
<div class="c" style="left:835px;width:142px;letter-spacing:-0.16px;">20150813 13:19:54.060</div>
<div class="c" style="left:1079px;width:52px;letter-spacing:0px;">X</div>
<div class="c" style="left:1131px;width:73px;letter-spacing:-0.87px;">JURDOC</div>
<div class="c" style="left:1204px;width:276px;letter-spacing:0px;">0273-533.34.58</div>
<div class="tri" style="left:0"></div>
</div>
<div class="a row b" style="top:80px">
<div class="c" style="left:0px;width:66px;letter-spacing:0px;">0003</div>
<div class="c" style="left:66px;width:182px;letter-spacing:0.4px;">Nombre del Clientes 0003</div>
<div class="c" style="left:248px;width:60px;letter-spacing:0px;">A</div>
<div class="c" style="left:308px;width:83px;letter-spacing:-0.8px;">VERDADERO</div>
<div class="c" style="left:391px;width:83px;letter-spacing:-0.8px;">VERDADERO</div>
<div class="c" style="left:474px;width:77px;letter-spacing:-0.9px;text-align:center;padding-left:0;">FALSO</div>
<div class="c" style="left:551px;width:142px;letter-spacing:-0.16px;">20150813 13:19:54.077</div>
<div class="c" style="left:693px;width:142px;letter-spacing:-0.16px;">20150813 13:19:54.060</div>
<div class="c" style="left:835px;width:142px;letter-spacing:-0.16px;">20150813 13:19:54.060</div>
<div class="c" style="left:1079px;width:52px;letter-spacing:0px;">X</div>
<div class="c" style="left:1131px;width:73px;letter-spacing:-0.87px;">JURDOC</div>
<div class="c" style="left:1204px;width:276px;letter-spacing:0px;">0273-532.27.81</div>
<div class="c" style="left:1480px;width:200px;letter-spacing:0px;">0273-935.20.83</div>
<div class="tri" style="left:0"></div>
</div>
<div class="a row w" style="top:100px">
<div class="gv" style="left:65px"></div>
<div class="gv" style="left:247px"></div>
<div class="gv" style="left:307px"></div>
<div class="gv" style="left:390px"></div>
<div class="gv" style="left:473px"></div>
<div class="gv" style="left:550px"></div>
<div class="gv" style="left:692px"></div>
<div class="gv" style="left:834px"></div>
<div class="gv" style="left:976px"></div>
<div class="gv" style="left:1024px"></div>
<div class="gv" style="left:1078px"></div>
<div class="gv" style="left:1130px"></div>
<div class="gv" style="left:1203px"></div>
<div class="gv" style="left:1479px"></div>
<div class="gv" style="left:1679px"></div>
<div class="c" style="left:0px;width:66px;letter-spacing:0px;">0004</div>
<div class="c" style="left:66px;width:182px;letter-spacing:0.4px;">Nombre del Clientes 0004</div>
<div class="c" style="left:248px;width:60px;letter-spacing:0px;">A</div>
<div class="c" style="left:308px;width:83px;letter-spacing:-0.8px;">VERDADERO</div>
<div class="c" style="left:391px;width:83px;letter-spacing:-0.8px;">VERDADERO</div>
<div class="c" style="left:474px;width:77px;letter-spacing:-0.9px;text-align:center;padding-left:0;">FALSO</div>
<div class="c" style="left:551px;width:142px;letter-spacing:-0.16px;">20150813 13:19:54.077</div>
<div class="c" style="left:693px;width:142px;letter-spacing:-0.16px;">20150813 13:19:54.060</div>
<div class="c" style="left:835px;width:142px;letter-spacing:-0.16px;">20150813 13:19:54.060</div>
<div class="c" style="left:1079px;width:52px;letter-spacing:0px;">X</div>
<div class="c" style="left:1131px;width:73px;letter-spacing:-0.87px;">JURDOC</div>
<div class="c" style="left:1204px;width:276px;letter-spacing:0px;">0273-552.35.71</div>
<div class="c" style="left:1480px;width:200px;letter-spacing:0px;">0414-561.65.80</div>
<div class="tri" style="left:0"></div>
</div>
<div class="a row b" style="top:120px">
<div class="c" style="left:0px;width:66px;letter-spacing:0px;">0005</div>
<div class="c" style="left:66px;width:182px;letter-spacing:0.4px;">Nombre del Clientes 0005</div>
<div class="c" style="left:248px;width:60px;letter-spacing:0px;">A</div>
<div class="c" style="left:308px;width:83px;letter-spacing:-0.8px;">VERDADERO</div>
<div class="c" style="left:391px;width:83px;letter-spacing:-0.8px;">VERDADERO</div>
<div class="c" style="left:474px;width:77px;letter-spacing:-0.9px;text-align:center;padding-left:0;">FALSO</div>
<div class="c" style="left:551px;width:142px;letter-spacing:-0.16px;">20150813 13:19:54.077</div>
<div class="c" style="left:693px;width:142px;letter-spacing:-0.16px;">20150813 13:19:54.060</div>
<div class="c" style="left:835px;width:142px;letter-spacing:-0.16px;">20150813 13:19:54.060</div>
<div class="c" style="left:1079px;width:52px;letter-spacing:0px;">X</div>
<div class="c" style="left:1131px;width:73px;letter-spacing:-0.87px;">JURDOC</div>
<div class="c" style="left:1204px;width:276px;letter-spacing:0px;">0286-717. 77.39</div>
<div class="tri" style="left:0"></div>
</div>
<div class="a row w" style="top:140px">
<div class="gv" style="left:65px"></div>
<div class="gv" style="left:247px"></div>
<div class="gv" style="left:307px"></div>
<div class="gv" style="left:390px"></div>
<div class="gv" style="left:473px"></div>
<div class="gv" style="left:550px"></div>
<div class="gv" style="left:692px"></div>
<div class="gv" style="left:834px"></div>
<div class="gv" style="left:976px"></div>
<div class="gv" style="left:1024px"></div>
<div class="gv" style="left:1078px"></div>
<div class="gv" style="left:1130px"></div>
<div class="gv" style="left:1203px"></div>
<div class="gv" style="left:1479px"></div>
<div class="gv" style="left:1679px"></div>
<div class="c" style="left:0px;width:66px;letter-spacing:0px;">0006</div>
<div class="c" style="left:66px;width:182px;letter-spacing:0.4px;">Nombre del Clientes 0006</div>
<div class="c" style="left:248px;width:60px;letter-spacing:0px;">A</div>
<div class="c" style="left:308px;width:83px;letter-spacing:-0.8px;">VERDADERO</div>
<div class="c" style="left:391px;width:83px;letter-spacing:-0.8px;">VERDADERO</div>
<div class="c" style="left:474px;width:77px;letter-spacing:-0.9px;text-align:center;padding-left:0;">FALSO</div>
<div class="c" style="left:551px;width:142px;letter-spacing:-0.16px;">20150813 13:19:54.077</div>
<div class="c" style="left:693px;width:142px;letter-spacing:-0.16px;">20150813 13:19:54.060</div>
<div class="c" style="left:835px;width:142px;letter-spacing:-0.16px;">20150813 13:19:54.060</div>
<div class="c" style="left:1079px;width:52px;letter-spacing:0px;">X</div>
<div class="c" style="left:1131px;width:73px;letter-spacing:-0.87px;">JURDOC</div>
<div class="c" style="left:1204px;width:276px;letter-spacing:0px;">0291-643.51.18</div>
<div class="tri" style="left:0"></div>
</div>
<div class="a row b" style="top:160px">
<div class="c" style="left:0px;width:66px;letter-spacing:0px;">0007</div>
<div class="c" style="left:66px;width:182px;letter-spacing:0.4px;">Nombre del Clientes 0007</div>
<div class="c" style="left:248px;width:60px;letter-spacing:0px;">A</div>
<div class="c" style="left:308px;width:83px;letter-spacing:-0.8px;">VERDADERO</div>
<div class="c" style="left:391px;width:83px;letter-spacing:-0.8px;">VERDADERO</div>
<div class="c" style="left:474px;width:77px;letter-spacing:-0.9px;text-align:center;padding-left:0;">FALSO</div>
<div class="c" style="left:551px;width:142px;letter-spacing:-0.16px;">20150813 13:19:54.077</div>
<div class="c" style="left:693px;width:142px;letter-spacing:-0.16px;">20150813 13:19:54.060</div>
<div class="c" style="left:835px;width:142px;letter-spacing:-0.16px;">20150813 13:19:54.060</div>
<div class="c" style="left:1079px;width:52px;letter-spacing:0px;">X</div>
<div class="c" style="left:1131px;width:73px;letter-spacing:-0.87px;">JURDOC</div>
<div class="c" style="left:1204px;width:276px;letter-spacing:0px;">0276-346.66.19</div>
<div class="c" style="left:1480px;width:200px;letter-spacing:0px;">0276-346.09.94</div>
<div class="tri" style="left:0"></div>
</div>
<div class="a row w" style="top:180px">
<div class="gv" style="left:65px"></div>
<div class="gv" style="left:247px"></div>
<div class="gv" style="left:307px"></div>
<div class="gv" style="left:390px"></div>
<div class="gv" style="left:473px"></div>
<div class="gv" style="left:550px"></div>
<div class="gv" style="left:692px"></div>
<div class="gv" style="left:834px"></div>
<div class="gv" style="left:976px"></div>
<div class="gv" style="left:1024px"></div>
<div class="gv" style="left:1078px"></div>
<div class="gv" style="left:1130px"></div>
<div class="gv" style="left:1203px"></div>
<div class="gv" style="left:1479px"></div>
<div class="gv" style="left:1679px"></div>
<div class="c" style="left:0px;width:66px;letter-spacing:0px;">0008</div>
<div class="c" style="left:66px;width:182px;letter-spacing:0.4px;">Nombre del Clientes 0008</div>
<div class="c" style="left:248px;width:60px;letter-spacing:0px;">A</div>
<div class="c" style="left:308px;width:83px;letter-spacing:-0.8px;">VERDADERO</div>
<div class="c" style="left:391px;width:83px;letter-spacing:-0.8px;">VERDADERO</div>
<div class="c" style="left:474px;width:77px;letter-spacing:-0.9px;text-align:center;padding-left:0;">FALSO</div>
<div class="c" style="left:551px;width:142px;letter-spacing:-0.16px;">20150813 13:19:54.077</div>
<div class="c" style="left:693px;width:142px;letter-spacing:-0.16px;">20150813 13:19:54.060</div>
<div class="c" style="left:835px;width:142px;letter-spacing:-0.16px;">20150813 13:19:54.060</div>
<div class="c" style="left:1079px;width:52px;letter-spacing:0px;">X</div>
<div class="c" style="left:1131px;width:73px;letter-spacing:-0.87px;">JURDOC</div>
<div class="c" style="left:1204px;width:276px;letter-spacing:0px;">0291-643.02.70</div>
<div class="c" style="left:1480px;width:200px;letter-spacing:0px;">0291-643.80.96</div>
<div class="tri" style="left:0"></div>
</div>
<div class="a row b" style="top:200px">
<div class="c" style="left:0px;width:66px;letter-spacing:0px;">0009</div>
<div class="c" style="left:66px;width:182px;letter-spacing:0.4px;">Nombre del Clientes 0009</div>
<div class="c" style="left:248px;width:60px;letter-spacing:0px;">A</div>
<div class="c" style="left:308px;width:83px;letter-spacing:-0.8px;">VERDADERO</div>
<div class="c" style="left:391px;width:83px;letter-spacing:-0.8px;">VERDADERO</div>
<div class="c" style="left:474px;width:77px;letter-spacing:-0.9px;text-align:center;padding-left:0;">FALSO</div>
<div class="c" style="left:551px;width:142px;letter-spacing:-0.16px;">20150813 13:19:54.077</div>
<div class="c" style="left:693px;width:142px;letter-spacing:-0.16px;">20150813 13:19:54.060</div>
<div class="c" style="left:835px;width:142px;letter-spacing:-0.16px;">20150813 13:19:54.060</div>
<div class="c" style="left:1079px;width:52px;letter-spacing:0px;">X</div>
<div class="c" style="left:1131px;width:73px;letter-spacing:-0.87px;">JURDOC</div>
<div class="c" style="left:1204px;width:276px;letter-spacing:0px;">0291-642-42-13</div>
<div class="tri" style="left:0"></div>
</div>
<div class="a row w" style="top:220px">
<div class="gv" style="left:65px"></div>
<div class="gv" style="left:247px"></div>
<div class="gv" style="left:307px"></div>
<div class="gv" style="left:390px"></div>
<div class="gv" style="left:473px"></div>
<div class="gv" style="left:550px"></div>
<div class="gv" style="left:692px"></div>
<div class="gv" style="left:834px"></div>
<div class="gv" style="left:976px"></div>
<div class="gv" style="left:1024px"></div>
<div class="gv" style="left:1078px"></div>
<div class="gv" style="left:1130px"></div>
<div class="gv" style="left:1203px"></div>
<div class="gv" style="left:1479px"></div>
<div class="gv" style="left:1679px"></div>
<div class="c" style="left:0px;width:66px;letter-spacing:0px;">0010</div>
<div class="c" style="left:66px;width:182px;letter-spacing:0.4px;">Nombre del Clientes 0010</div>
<div class="c" style="left:248px;width:60px;letter-spacing:0px;">A</div>
<div class="c" style="left:308px;width:83px;letter-spacing:-0.8px;">VERDADERO</div>
<div class="c" style="left:391px;width:83px;letter-spacing:-0.8px;">VERDADERO</div>
<div class="c" style="left:474px;width:77px;letter-spacing:-0.9px;text-align:center;padding-left:0;">FALSO</div>
<div class="c" style="left:551px;width:142px;letter-spacing:-0.16px;">20150813 13:19:54.077</div>
<div class="c" style="left:693px;width:142px;letter-spacing:-0.16px;">20150813 13:19:54.060</div>
<div class="c" style="left:835px;width:142px;letter-spacing:-0.16px;">20150813 13:19:54.060</div>
<div class="c" style="left:1079px;width:52px;letter-spacing:0px;">X</div>
<div class="c" style="left:1131px;width:73px;letter-spacing:-0.87px;">NATRES</div>
<div class="c" style="left:1204px;width:276px;letter-spacing:0px;">0274-271.19.34</div>
<div class="tri" style="left:0"></div>
</div>
<div class="a row b" style="top:240px">
<div class="c" style="left:0px;width:66px;letter-spacing:0px;">0011</div>
<div class="c" style="left:66px;width:182px;letter-spacing:0.4px;">Nombre del Clientes 0011</div>
<div class="c" style="left:248px;width:60px;letter-spacing:0px;">A</div>
<div class="c" style="left:308px;width:83px;letter-spacing:-0.8px;">VERDADERO</div>
<div class="c" style="left:391px;width:83px;letter-spacing:-0.8px;">VERDADERO</div>
<div class="c" style="left:474px;width:77px;letter-spacing:-0.9px;text-align:center;padding-left:0;">FALSO</div>
<div class="c" style="left:551px;width:142px;letter-spacing:-0.16px;">20150813 13:19:54.077</div>
<div class="c" style="left:693px;width:142px;letter-spacing:-0.16px;">20150813 13:19:54.060</div>
<div class="c" style="left:835px;width:142px;letter-spacing:-0.16px;">20150813 13:19:54.060</div>
<div class="c" style="left:1079px;width:52px;letter-spacing:0px;">X</div>
<div class="c" style="left:1131px;width:73px;letter-spacing:-0.87px;">JURDOC</div>
<div class="c" style="left:1204px;width:276px;letter-spacing:0px;">0273-532.27.10</div>
<div class="tri" style="left:0"></div>
</div>
<div class="a row w" style="top:260px">
<div class="gv" style="left:65px"></div>
<div class="gv" style="left:247px"></div>
<div class="gv" style="left:307px"></div>
<div class="gv" style="left:390px"></div>
<div class="gv" style="left:473px"></div>
<div class="gv" style="left:550px"></div>
<div class="gv" style="left:692px"></div>
<div class="gv" style="left:834px"></div>
<div class="gv" style="left:976px"></div>
<div class="gv" style="left:1024px"></div>
<div class="gv" style="left:1078px"></div>
<div class="gv" style="left:1130px"></div>
<div class="gv" style="left:1203px"></div>
<div class="gv" style="left:1479px"></div>
<div class="gv" style="left:1679px"></div>
<div class="c" style="left:0px;width:66px;letter-spacing:0px;">0012</div>
<div class="c" style="left:66px;width:182px;letter-spacing:0.4px;">Nombre del Clientes 0012</div>
<div class="c" style="left:248px;width:60px;letter-spacing:0px;">A</div>
<div class="c" style="left:308px;width:83px;letter-spacing:-0.8px;">VERDADERO</div>
<div class="c" style="left:391px;width:83px;letter-spacing:-0.8px;">VERDADERO</div>
<div class="c" style="left:474px;width:77px;letter-spacing:-0.9px;text-align:center;padding-left:0;">FALSO</div>
<div class="c" style="left:551px;width:142px;letter-spacing:-0.16px;">20150813 13:19:54.077</div>
<div class="c" style="left:693px;width:142px;letter-spacing:-0.16px;">20150813 13:19:54.060</div>
<div class="c" style="left:835px;width:142px;letter-spacing:-0.16px;">20150813 13:19:54.060</div>
<div class="c" style="left:1079px;width:52px;letter-spacing:0px;">X</div>
<div class="c" style="left:1131px;width:73px;letter-spacing:-0.87px;">JURDOC</div>
<div class="c" style="left:1204px;width:276px;letter-spacing:0px;">0273-532.27.81/0273-532.20.83</div>
<div class="c" style="left:1480px;width:200px;letter-spacing:0px;">0273-541.37.19</div>
<div class="tri" style="left:0"></div>
</div>
<div class="a row b" style="top:280px">
<div class="c" style="left:0px;width:66px;letter-spacing:0px;">0013</div>
<div class="c" style="left:66px;width:182px;letter-spacing:0.4px;">Nombre del Clientes 0013</div>
<div class="c" style="left:248px;width:60px;letter-spacing:0px;">A</div>
<div class="c" style="left:308px;width:83px;letter-spacing:-0.8px;">VERDADERO</div>
<div class="c" style="left:391px;width:83px;letter-spacing:-0.8px;">VERDADERO</div>
<div class="c" style="left:474px;width:77px;letter-spacing:-0.9px;text-align:center;padding-left:0;">FALSO</div>
<div class="c" style="left:551px;width:142px;letter-spacing:-0.16px;">20150813 13:19:54.077</div>
<div class="c" style="left:693px;width:142px;letter-spacing:-0.16px;">20150813 13:19:54.060</div>
<div class="c" style="left:835px;width:142px;letter-spacing:-0.16px;">20150813 13:19:54.060</div>
<div class="c" style="left:1079px;width:52px;letter-spacing:0px;">X</div>
<div class="c" style="left:1131px;width:73px;letter-spacing:-0.87px;">JURDOC</div>
<div class="c" style="left:1204px;width:276px;letter-spacing:0px;">0273-541.39.08</div>
<div class="c" style="left:1480px;width:200px;letter-spacing:0px;">0426-557.23.74</div>
<div class="tri" style="left:0"></div>
</div>
<div class="a row w" style="top:300px">
<div class="gv" style="left:65px"></div>
<div class="gv" style="left:247px"></div>
<div class="gv" style="left:307px"></div>
<div class="gv" style="left:390px"></div>
<div class="gv" style="left:473px"></div>
<div class="gv" style="left:550px"></div>
<div class="gv" style="left:692px"></div>
<div class="gv" style="left:834px"></div>
<div class="gv" style="left:976px"></div>
<div class="gv" style="left:1024px"></div>
<div class="gv" style="left:1078px"></div>
<div class="gv" style="left:1130px"></div>
<div class="gv" style="left:1203px"></div>
<div class="gv" style="left:1479px"></div>
<div class="gv" style="left:1679px"></div>
<div class="c" style="left:0px;width:66px;letter-spacing:0px;">0014</div>
<div class="c" style="left:66px;width:182px;letter-spacing:0.4px;">Nombre del Clientes 0014</div>
<div class="c" style="left:248px;width:60px;letter-spacing:0px;">A</div>
<div class="c" style="left:308px;width:83px;letter-spacing:-0.8px;">VERDADERO</div>
<div class="c" style="left:391px;width:83px;letter-spacing:-0.8px;">VERDADERO</div>
<div class="c" style="left:474px;width:77px;letter-spacing:-0.9px;text-align:center;padding-left:0;">FALSO</div>
<div class="c" style="left:551px;width:142px;letter-spacing:-0.16px;">20150813 13:19:54.077</div>
<div class="c" style="left:693px;width:142px;letter-spacing:-0.16px;">20150813 13:19:54.060</div>
<div class="c" style="left:835px;width:142px;letter-spacing:-0.16px;">20150813 13:19:54.060</div>
<div class="c" style="left:1079px;width:52px;letter-spacing:0px;">X</div>
<div class="c" style="left:1131px;width:73px;letter-spacing:-0.87px;">JURDOC</div>
<div class="c" style="left:1204px;width:276px;letter-spacing:0px;">0273-532-11.58</div>
<div class="tri" style="left:0"></div>
</div>
<div class="a row b" style="top:320px">
<div class="c" style="left:0px;width:66px;letter-spacing:0px;">0015</div>
<div class="c" style="left:66px;width:182px;letter-spacing:0.4px;">Nombre del Clientes 0015</div>
<div class="c" style="left:248px;width:60px;letter-spacing:0px;">A</div>
<div class="c" style="left:308px;width:83px;letter-spacing:-0.8px;">VERDADERO</div>
<div class="c" style="left:391px;width:83px;letter-spacing:-0.8px;">VERDADERO</div>
<div class="c" style="left:474px;width:77px;letter-spacing:-0.9px;text-align:center;padding-left:0;">FALSO</div>
<div class="c" style="left:551px;width:142px;letter-spacing:-0.16px;">20150813 13:19:54.077</div>
<div class="c" style="left:693px;width:142px;letter-spacing:-0.16px;">20150813 13:19:54.060</div>
<div class="c" style="left:835px;width:142px;letter-spacing:-0.16px;">20150813 13:19:54.060</div>
<div class="c" style="left:1079px;width:52px;letter-spacing:0px;">X</div>
<div class="c" style="left:1131px;width:73px;letter-spacing:-0.87px;">JURDOC</div>
<div class="c" style="left:1204px;width:276px;letter-spacing:0px;">0243-234.82.13</div>
<div class="tri" style="left:0"></div>
</div>
<div class="a row w" style="top:340px">
<div class="gv" style="left:65px"></div>
<div class="gv" style="left:247px"></div>
<div class="gv" style="left:307px"></div>
<div class="gv" style="left:390px"></div>
<div class="gv" style="left:473px"></div>
<div class="gv" style="left:550px"></div>
<div class="gv" style="left:692px"></div>
<div class="gv" style="left:834px"></div>
<div class="gv" style="left:976px"></div>
<div class="gv" style="left:1024px"></div>
<div class="gv" style="left:1078px"></div>
<div class="gv" style="left:1130px"></div>
<div class="gv" style="left:1203px"></div>
<div class="gv" style="left:1479px"></div>
<div class="gv" style="left:1679px"></div>
<div class="c" style="left:0px;width:66px;letter-spacing:0px;">0016</div>
<div class="c" style="left:66px;width:182px;letter-spacing:0.4px;">Nombre del Clientes 0016</div>
<div class="c" style="left:248px;width:60px;letter-spacing:0px;">A</div>
<div class="c" style="left:308px;width:83px;letter-spacing:-0.8px;">VERDADERO</div>
<div class="c" style="left:391px;width:83px;letter-spacing:-0.8px;">VERDADERO</div>
<div class="c" style="left:474px;width:77px;letter-spacing:-0.9px;text-align:center;padding-left:0;">FALSO</div>
<div class="c" style="left:551px;width:142px;letter-spacing:-0.16px;">20150813 13:19:54.077</div>
<div class="c" style="left:693px;width:142px;letter-spacing:-0.16px;">20150813 13:19:54.060</div>
<div class="c" style="left:835px;width:142px;letter-spacing:-0.16px;">20150813 13:19:54.060</div>
<div class="c" style="left:1079px;width:52px;letter-spacing:0px;">X</div>
<div class="c" style="left:1131px;width:73px;letter-spacing:-0.87px;">JURDOC</div>
<div class="c" style="left:1204px;width:276px;letter-spacing:0px;">0274-262.19.27</div>
<div class="tri" style="left:0"></div>
</div>
<div class="a row b" style="top:360px">
<div class="c" style="left:0px;width:66px;letter-spacing:0px;">0017</div>
<div class="c" style="left:66px;width:182px;letter-spacing:0.4px;">Nombre del Clientes 0017</div>
<div class="c" style="left:248px;width:60px;letter-spacing:0px;">A</div>
<div class="c" style="left:308px;width:83px;letter-spacing:-0.8px;">VERDADERO</div>
<div class="c" style="left:391px;width:83px;letter-spacing:-0.8px;">VERDADERO</div>
<div class="c" style="left:474px;width:77px;letter-spacing:-0.9px;text-align:center;padding-left:0;">FALSO</div>
<div class="c" style="left:551px;width:142px;letter-spacing:-0.16px;">20150813 13:19:54.077</div>
<div class="c" style="left:693px;width:142px;letter-spacing:-0.16px;">20150813 13:19:54.060</div>
<div class="c" style="left:835px;width:142px;letter-spacing:-0.16px;">20150813 13:19:54.060</div>
<div class="c" style="left:1079px;width:52px;letter-spacing:0px;">X</div>
<div class="c" style="left:1131px;width:73px;letter-spacing:-0.87px;">JURDOC</div>
<div class="c" style="left:1204px;width:276px;letter-spacing:0px;">0291-643.35.70</div>
<div class="c" style="left:1480px;width:200px;letter-spacing:0px;">0414-896.65.16</div>
<div class="tri" style="left:0"></div>
</div>
<div class="a row w" style="top:380px">
<div class="gv" style="left:65px"></div>
<div class="gv" style="left:247px"></div>
<div class="gv" style="left:307px"></div>
<div class="gv" style="left:390px"></div>
<div class="gv" style="left:473px"></div>
<div class="gv" style="left:550px"></div>
<div class="gv" style="left:692px"></div>
<div class="gv" style="left:834px"></div>
<div class="gv" style="left:976px"></div>
<div class="gv" style="left:1024px"></div>
<div class="gv" style="left:1078px"></div>
<div class="gv" style="left:1130px"></div>
<div class="gv" style="left:1203px"></div>
<div class="gv" style="left:1479px"></div>
<div class="gv" style="left:1679px"></div>
<div class="c" style="left:0px;width:66px;letter-spacing:0px;">0018</div>
<div class="c" style="left:66px;width:182px;letter-spacing:0.4px;">Nombre del Clientes 0018</div>
<div class="c" style="left:248px;width:60px;letter-spacing:0px;">A</div>
<div class="c" style="left:308px;width:83px;letter-spacing:-0.8px;">VERDADERO</div>
<div class="c" style="left:391px;width:83px;letter-spacing:-0.8px;">VERDADERO</div>
<div class="c" style="left:474px;width:77px;letter-spacing:-0.9px;text-align:center;padding-left:0;">FALSO</div>
<div class="c" style="left:551px;width:142px;letter-spacing:-0.16px;">20150813 13:19:54.077</div>
<div class="c" style="left:693px;width:142px;letter-spacing:-0.16px;">20150813 13:19:54.060</div>
<div class="c" style="left:835px;width:142px;letter-spacing:-0.16px;">20150813 13:19:54.060</div>
<div class="c" style="left:1079px;width:52px;letter-spacing:0px;">X</div>
<div class="c" style="left:1131px;width:73px;letter-spacing:-0.87px;">JURDOC</div>
<div class="c" style="left:1204px;width:276px;letter-spacing:0px;">0273-541.36.68</div>
<div class="c" style="left:1480px;width:200px;letter-spacing:0px;">0273-552.14.02</div>
<div class="tri" style="left:0"></div>
</div>
<div class="a row b" style="top:400px">
<div class="c" style="left:0px;width:66px;letter-spacing:0px;">0019</div>
<div class="c" style="left:66px;width:182px;letter-spacing:0.4px;">Nombre del Clientes 0019</div>
<div class="c" style="left:248px;width:60px;letter-spacing:0px;">A</div>
<div class="c" style="left:308px;width:83px;letter-spacing:-0.8px;">VERDADERO</div>
<div class="c" style="left:391px;width:83px;letter-spacing:-0.8px;">VERDADERO</div>
<div class="c" style="left:474px;width:77px;letter-spacing:-0.9px;text-align:center;padding-left:0;">FALSO</div>
<div class="c" style="left:551px;width:142px;letter-spacing:-0.16px;">20150813 13:19:54.077</div>
<div class="c" style="left:693px;width:142px;letter-spacing:-0.16px;">20150813 13:19:54.060</div>
<div class="c" style="left:835px;width:142px;letter-spacing:-0.16px;">20150813 13:19:54.060</div>
<div class="c" style="left:1079px;width:52px;letter-spacing:0px;">X</div>
<div class="c" style="left:1131px;width:73px;letter-spacing:-0.87px;">JURDOC</div>
<div class="c" style="left:1204px;width:276px;letter-spacing:0px;">0285-651.85.79</div>
<div class="c" style="left:1480px;width:200px;letter-spacing:0px;">584148936627</div>
<div class="tri" style="left:0"></div>
<div class="tri" style="left:1480px"></div>
</div>
<div class="a row w" style="top:420px">
<div class="gv" style="left:65px"></div>
<div class="gv" style="left:247px"></div>
<div class="gv" style="left:307px"></div>
<div class="gv" style="left:390px"></div>
<div class="gv" style="left:473px"></div>
<div class="gv" style="left:550px"></div>
<div class="gv" style="left:692px"></div>
<div class="gv" style="left:834px"></div>
<div class="gv" style="left:976px"></div>
<div class="gv" style="left:1024px"></div>
<div class="gv" style="left:1078px"></div>
<div class="gv" style="left:1130px"></div>
<div class="gv" style="left:1203px"></div>
<div class="gv" style="left:1479px"></div>
<div class="gv" style="left:1679px"></div>
<div class="c" style="left:0px;width:66px;letter-spacing:0px;">0020</div>
<div class="c" style="left:66px;width:182px;letter-spacing:0.4px;">Nombre del Clientes 0020</div>
<div class="c" style="left:248px;width:60px;letter-spacing:0px;">A</div>
<div class="c" style="left:308px;width:83px;letter-spacing:-0.8px;">VERDADERO</div>
<div class="c" style="left:391px;width:83px;letter-spacing:-0.8px;">VERDADERO</div>
<div class="c" style="left:474px;width:77px;letter-spacing:-0.9px;text-align:center;padding-left:0;">FALSO</div>
<div class="c" style="left:551px;width:142px;letter-spacing:-0.16px;">20150813 13:19:54.077</div>
<div class="c" style="left:693px;width:142px;letter-spacing:-0.16px;">20150813 13:19:54.060</div>
<div class="c" style="left:835px;width:142px;letter-spacing:-0.16px;">20150813 13:19:54.060</div>
<div class="c" style="left:1079px;width:52px;letter-spacing:0px;">X</div>
<div class="c" style="left:1131px;width:73px;letter-spacing:-0.87px;">JURDOC</div>
<div class="c" style="left:1204px;width:276px;letter-spacing:0px;">0274-263.33.11</div>
<div class="c" style="left:1480px;width:200px;letter-spacing:0px;">0274-263.13.34</div>
<div class="c" style="left:1680px;width:193px;width:193px;">02742620168 ADRIANA ADMON</div>
<div class="tri" style="left:0"></div>
</div>
<div class="a row b" style="top:440px">
<div class="c" style="left:0px;width:66px;letter-spacing:0px;">0021</div>
<div class="c" style="left:66px;width:182px;letter-spacing:0.4px;">Nombre del Clientes 0021</div>
<div class="c" style="left:248px;width:60px;letter-spacing:0px;">A</div>
<div class="c" style="left:308px;width:83px;letter-spacing:-0.8px;">VERDADERO</div>
<div class="c" style="left:391px;width:83px;letter-spacing:-0.8px;">VERDADERO</div>
<div class="c" style="left:474px;width:77px;letter-spacing:-0.9px;text-align:center;padding-left:0;">FALSO</div>
<div class="c" style="left:551px;width:142px;letter-spacing:-0.16px;">20150813 13:19:54.077</div>
<div class="c" style="left:693px;width:142px;letter-spacing:-0.16px;">20150813 13:19:54.060</div>
<div class="c" style="left:835px;width:142px;letter-spacing:-0.16px;">20150813 13:19:54.060</div>
<div class="c" style="left:1079px;width:52px;letter-spacing:0px;">X</div>
<div class="c" style="left:1131px;width:73px;letter-spacing:-0.87px;">JURDOC</div>
<div class="c" style="left:1204px;width:276px;letter-spacing:0px;">0273-532.11.37</div>
<div class="tri" style="left:0"></div>
</div>
<div class="a row w" style="top:460px">
<div class="gv" style="left:65px"></div>
<div class="gv" style="left:247px"></div>
<div class="gv" style="left:307px"></div>
<div class="gv" style="left:390px"></div>
<div class="gv" style="left:473px"></div>
<div class="gv" style="left:550px"></div>
<div class="gv" style="left:692px"></div>
<div class="gv" style="left:834px"></div>
<div class="gv" style="left:976px"></div>
<div class="gv" style="left:1024px"></div>
<div class="gv" style="left:1078px"></div>
<div class="gv" style="left:1130px"></div>
<div class="gv" style="left:1203px"></div>
<div class="gv" style="left:1479px"></div>
<div class="gv" style="left:1679px"></div>
<div class="c" style="left:0px;width:66px;letter-spacing:0px;">0022</div>
<div class="c" style="left:66px;width:182px;letter-spacing:0.4px;">Nombre del Clientes 0022</div>
<div class="c" style="left:248px;width:60px;letter-spacing:0px;">A</div>
<div class="c" style="left:308px;width:83px;letter-spacing:-0.8px;">VERDADERO</div>
<div class="c" style="left:391px;width:83px;letter-spacing:-0.8px;">VERDADERO</div>
<div class="c" style="left:474px;width:77px;letter-spacing:-0.9px;text-align:center;padding-left:0;">FALSO</div>
<div class="c" style="left:551px;width:142px;letter-spacing:-0.16px;">20150813 13:19:54.077</div>
<div class="c" style="left:693px;width:142px;letter-spacing:-0.16px;">20150813 13:19:54.060</div>
<div class="c" style="left:835px;width:142px;letter-spacing:-0.16px;">20150813 13:19:54.060</div>
<div class="c" style="left:1079px;width:52px;letter-spacing:0px;">X</div>
<div class="c" style="left:1131px;width:73px;letter-spacing:-0.87px;">JURDOC</div>
<div class="c" style="left:1204px;width:276px;letter-spacing:0px;">0291-641.12.77</div>
<div class="tri" style="left:0"></div>
</div>
<div class="a row b" style="top:480px">
<div class="c" style="left:0px;width:66px;letter-spacing:0px;">0023</div>
<div class="c" style="left:66px;width:182px;letter-spacing:0.4px;">Nombre del Clientes 0023</div>
<div class="c" style="left:248px;width:60px;letter-spacing:0px;">A</div>
<div class="c" style="left:308px;width:83px;letter-spacing:-0.8px;">VERDADERO</div>
<div class="c" style="left:391px;width:83px;letter-spacing:-0.8px;">VERDADERO</div>
<div class="c" style="left:474px;width:77px;letter-spacing:-0.9px;text-align:center;padding-left:0;">FALSO</div>
<div class="c" style="left:551px;width:142px;letter-spacing:-0.16px;">20150813 13:19:54.077</div>
<div class="c" style="left:693px;width:142px;letter-spacing:-0.16px;">20150813 13:19:54.060</div>
<div class="c" style="left:835px;width:142px;letter-spacing:-0.16px;">20150813 13:19:54.060</div>
<div class="c" style="left:1079px;width:52px;letter-spacing:0px;">X</div>
<div class="c" style="left:1131px;width:73px;letter-spacing:-0.87px;">JURDOC</div>
<div class="c" style="left:1204px;width:276px;letter-spacing:0px;">02869511194</div>
<div class="tri" style="left:0"></div>
<div class="tri" style="left:1204px"></div>
</div>
<div class="a row w" style="top:500px">
<div class="gv" style="left:65px"></div>
<div class="gv" style="left:247px"></div>
<div class="gv" style="left:307px"></div>
<div class="gv" style="left:390px"></div>
<div class="gv" style="left:473px"></div>
<div class="gv" style="left:550px"></div>
<div class="gv" style="left:692px"></div>
<div class="gv" style="left:834px"></div>
<div class="gv" style="left:976px"></div>
<div class="gv" style="left:1024px"></div>
<div class="gv" style="left:1078px"></div>
<div class="gv" style="left:1130px"></div>
<div class="gv" style="left:1203px"></div>
<div class="gv" style="left:1479px"></div>
<div class="gv" style="left:1679px"></div>
<div class="c" style="left:0px;width:66px;letter-spacing:0px;">0024</div>
<div class="c" style="left:66px;width:182px;letter-spacing:0.4px;">Nombre del Clientes 0024</div>
<div class="c" style="left:248px;width:60px;letter-spacing:0px;">A</div>
<div class="c" style="left:308px;width:83px;letter-spacing:-0.8px;">VERDADERO</div>
<div class="c" style="left:391px;width:83px;letter-spacing:-0.8px;">VERDADERO</div>
<div class="c" style="left:474px;width:77px;letter-spacing:-0.9px;text-align:center;padding-left:0;">FALSO</div>
<div class="c" style="left:551px;width:142px;letter-spacing:-0.16px;">20150813 13:19:54.077</div>
<div class="c" style="left:693px;width:142px;letter-spacing:-0.16px;">20150813 13:19:54.060</div>
<div class="c" style="left:835px;width:142px;letter-spacing:-0.16px;">20150813 13:19:54.060</div>
<div class="c" style="left:1079px;width:52px;letter-spacing:0px;">X</div>
<div class="c" style="left:1131px;width:73px;letter-spacing:-0.87px;">JURDOC</div>
<div class="c" style="left:1204px;width:276px;letter-spacing:0px;">(0273)928.06.29/0414.153.54.56</div>
<div class="tri" style="left:0"></div>
</div>
<div class="a row b" style="top:520px">
<div class="c" style="left:0px;width:66px;letter-spacing:0px;">0025</div>
<div class="c" style="left:66px;width:182px;letter-spacing:0.4px;">Nombre del Clientes 0025</div>
<div class="c" style="left:248px;width:60px;letter-spacing:0px;">A</div>
<div class="c" style="left:308px;width:83px;letter-spacing:-0.8px;">VERDADERO</div>
<div class="c" style="left:391px;width:83px;letter-spacing:-0.8px;">VERDADERO</div>
<div class="c" style="left:474px;width:77px;letter-spacing:-0.9px;text-align:center;padding-left:0;">FALSO</div>
<div class="c" style="left:551px;width:142px;letter-spacing:-0.16px;">20150813 13:19:54.077</div>
<div class="c" style="left:693px;width:142px;letter-spacing:-0.16px;">20150813 13:19:54.060</div>
<div class="c" style="left:835px;width:142px;letter-spacing:-0.16px;">20150813 13:19:54.060</div>
<div class="c" style="left:1079px;width:52px;letter-spacing:0px;">X</div>
<div class="c" style="left:1131px;width:73px;letter-spacing:-0.87px;">JURDOC</div>
<div class="c" style="left:1204px;width:276px;letter-spacing:0px;">(0274)263.14.06</div>
<div class="tri" style="left:0"></div>
</div>
<div class="a row w" style="top:540px">
<div class="gv" style="left:65px"></div>
<div class="gv" style="left:247px"></div>
<div class="gv" style="left:307px"></div>
<div class="gv" style="left:390px"></div>
<div class="gv" style="left:473px"></div>
<div class="gv" style="left:550px"></div>
<div class="gv" style="left:692px"></div>
<div class="gv" style="left:834px"></div>
<div class="gv" style="left:976px"></div>
<div class="gv" style="left:1024px"></div>
<div class="gv" style="left:1078px"></div>
<div class="gv" style="left:1130px"></div>
<div class="gv" style="left:1203px"></div>
<div class="gv" style="left:1479px"></div>
<div class="gv" style="left:1679px"></div>
<div class="c" style="left:0px;width:66px;letter-spacing:0px;">0026</div>
<div class="c" style="left:66px;width:182px;letter-spacing:0.4px;">Nombre del Clientes 0026</div>
<div class="c" style="left:248px;width:60px;letter-spacing:0px;">A</div>
<div class="c" style="left:308px;width:83px;letter-spacing:-0.8px;">VERDADERO</div>
<div class="c" style="left:391px;width:83px;letter-spacing:-0.8px;">VERDADERO</div>
<div class="c" style="left:474px;width:77px;letter-spacing:-0.9px;text-align:center;padding-left:0;">FALSO</div>
<div class="c" style="left:551px;width:142px;letter-spacing:-0.16px;">20150813 13:19:54.077</div>
<div class="c" style="left:693px;width:142px;letter-spacing:-0.16px;">20150813 13:19:54.060</div>
<div class="c" style="left:835px;width:142px;letter-spacing:-0.16px;">20150813 13:19:54.060</div>
<div class="c" style="left:1079px;width:52px;letter-spacing:0px;">X</div>
<div class="c" style="left:1131px;width:73px;letter-spacing:-0.87px;">JURDOC</div>
<div class="c" style="left:1204px;width:276px;letter-spacing:0px;">0286-951.51.35</div>
<div class="c" style="left:1480px;width:200px;letter-spacing:0px;">0286-951.66.97</div>
<div class="c" style="left:1680px;width:193px;letter-spacing:0px;">0286-951.77.86</div>
<div class="tri" style="left:0"></div>
</div>
<div class="a row b" style="top:560px">
<div class="c" style="left:0px;width:66px;letter-spacing:0px;">0027</div>
<div class="c" style="left:66px;width:182px;letter-spacing:0.4px;">Nombre del Clientes 0027</div>
<div class="c" style="left:248px;width:60px;letter-spacing:0px;">A</div>
<div class="c" style="left:308px;width:83px;letter-spacing:-0.8px;">VERDADERO</div>
<div class="c" style="left:391px;width:83px;letter-spacing:-0.8px;">VERDADERO</div>
<div class="c" style="left:474px;width:77px;letter-spacing:-0.9px;text-align:center;padding-left:0;">FALSO</div>
<div class="c" style="left:551px;width:142px;letter-spacing:-0.16px;">20150813 13:19:54.077</div>
<div class="c" style="left:693px;width:142px;letter-spacing:-0.16px;">20150813 13:19:54.060</div>
<div class="c" style="left:835px;width:142px;letter-spacing:-0.16px;">20150813 13:19:54.060</div>
<div class="c" style="left:1079px;width:52px;letter-spacing:0px;">X</div>
<div class="c" style="left:1131px;width:73px;letter-spacing:-0.87px;">JURDOC</div>
<div class="c" style="left:1204px;width:276px;letter-spacing:0px;">(0273)5520551-5521415</div>
<div class="tri" style="left:0"></div>
</div>
<div class="a row w" style="top:580px">
<div class="gv" style="left:65px"></div>
<div class="gv" style="left:247px"></div>
<div class="gv" style="left:307px"></div>
<div class="gv" style="left:390px"></div>
<div class="gv" style="left:473px"></div>
<div class="gv" style="left:550px"></div>
<div class="gv" style="left:692px"></div>
<div class="gv" style="left:834px"></div>
<div class="gv" style="left:976px"></div>
<div class="gv" style="left:1024px"></div>
<div class="gv" style="left:1078px"></div>
<div class="gv" style="left:1130px"></div>
<div class="gv" style="left:1203px"></div>
<div class="gv" style="left:1479px"></div>
<div class="gv" style="left:1679px"></div>
<div class="c" style="left:0px;width:66px;letter-spacing:0px;">0028</div>
<div class="c" style="left:66px;width:182px;letter-spacing:0.4px;">Nombre del Clientes 0028</div>
<div class="c" style="left:248px;width:60px;letter-spacing:0px;">A</div>
<div class="c" style="left:308px;width:83px;letter-spacing:-0.8px;">VERDADERO</div>
<div class="c" style="left:391px;width:83px;letter-spacing:-0.8px;">VERDADERO</div>
<div class="c" style="left:474px;width:77px;letter-spacing:-0.9px;text-align:center;padding-left:0;">FALSO</div>
<div class="c" style="left:551px;width:142px;letter-spacing:-0.16px;">20150813 13:19:54.077</div>
<div class="c" style="left:693px;width:142px;letter-spacing:-0.16px;">20150813 13:19:54.060</div>
<div class="c" style="left:835px;width:142px;letter-spacing:-0.16px;">20150813 13:19:54.060</div>
<div class="c" style="left:1079px;width:52px;letter-spacing:0px;">X</div>
<div class="c" style="left:1131px;width:73px;letter-spacing:-0.87px;">NATRES</div>
<div class="c" style="left:1204px;width:276px;letter-spacing:0px;">0273-808.30.69</div>
<div class="tri" style="left:0"></div>
</div>
<div class="a row b" style="top:600px">
<div class="c" style="left:0px;width:66px;letter-spacing:0px;">0029</div>
<div class="c" style="left:66px;width:182px;letter-spacing:0.4px;">Nombre del Clientes 0029</div>
<div class="c" style="left:248px;width:60px;letter-spacing:0px;">A</div>
<div class="c" style="left:308px;width:83px;letter-spacing:-0.8px;">VERDADERO</div>
<div class="c" style="left:391px;width:83px;letter-spacing:-0.8px;">VERDADERO</div>
<div class="c" style="left:474px;width:77px;letter-spacing:-0.9px;text-align:center;padding-left:0;">FALSO</div>
<div class="c" style="left:551px;width:142px;letter-spacing:-0.16px;">20150813 13:19:54.077</div>
<div class="c" style="left:693px;width:142px;letter-spacing:-0.16px;">20150813 13:19:54.060</div>
<div class="c" style="left:835px;width:142px;letter-spacing:-0.16px;">20150813 13:19:54.060</div>
<div class="c" style="left:1079px;width:52px;letter-spacing:0px;">X</div>
<div class="c" style="left:1131px;width:73px;letter-spacing:-0.87px;">JURDOC</div>
<div class="c" style="left:1204px;width:276px;letter-spacing:0px;">0273-541.32.73</div>
<div class="c" style="left:1480px;width:200px;letter-spacing:0px;">0273-400.82.73</div>
<div class="tri" style="left:0"></div>
</div>
<div class="a row w" style="top:620px">
<div class="gv" style="left:65px"></div>
<div class="gv" style="left:247px"></div>
<div class="gv" style="left:307px"></div>
<div class="gv" style="left:390px"></div>
<div class="gv" style="left:473px"></div>
<div class="gv" style="left:550px"></div>
<div class="gv" style="left:692px"></div>
<div class="gv" style="left:834px"></div>
<div class="gv" style="left:976px"></div>
<div class="gv" style="left:1024px"></div>
<div class="gv" style="left:1078px"></div>
<div class="gv" style="left:1130px"></div>
<div class="gv" style="left:1203px"></div>
<div class="gv" style="left:1479px"></div>
<div class="gv" style="left:1679px"></div>
<div class="c" style="left:0px;width:66px;letter-spacing:0px;">0030</div>
<div class="c" style="left:66px;width:182px;letter-spacing:0.4px;">Nombre del Clientes 0030</div>
<div class="c" style="left:248px;width:60px;letter-spacing:0px;">A</div>
<div class="c" style="left:308px;width:83px;letter-spacing:-0.8px;">VERDADERO</div>
<div class="c" style="left:391px;width:83px;letter-spacing:-0.8px;">VERDADERO</div>
<div class="c" style="left:474px;width:77px;letter-spacing:-0.9px;text-align:center;padding-left:0;">FALSO</div>
<div class="c" style="left:551px;width:142px;letter-spacing:-0.16px;">20150813 13:19:54.077</div>
<div class="c" style="left:693px;width:142px;letter-spacing:-0.16px;">20150813 13:19:54.060</div>
<div class="c" style="left:835px;width:142px;letter-spacing:-0.16px;">20150813 13:19:54.060</div>
<div class="c" style="left:1079px;width:52px;letter-spacing:0px;">X</div>
<div class="c" style="left:1131px;width:73px;letter-spacing:-0.87px;">JURDOC</div>
<div class="c" style="left:1204px;width:276px;letter-spacing:0px;">0274-271.35.57</div>
<div class="c" style="left:1480px;width:200px;letter-spacing:0px;">04140801061</div>
<div class="c" style="left:1680px;width:193px;letter-spacing:0px;">0274-271.21.76</div>
<div class="tri" style="left:0"></div>
<div class="tri" style="left:1480px"></div>
</div>
<div class="a row b" style="top:640px">
<div class="c" style="left:0px;width:66px;letter-spacing:0px;">0031</div>
<div class="c" style="left:66px;width:182px;letter-spacing:0.4px;">Nombre del Clientes 0031</div>
<div class="c" style="left:248px;width:60px;letter-spacing:0px;">A</div>
<div class="c" style="left:308px;width:83px;letter-spacing:-0.8px;">VERDADERO</div>
<div class="c" style="left:391px;width:83px;letter-spacing:-0.8px;">VERDADERO</div>
<div class="c" style="left:474px;width:77px;letter-spacing:-0.9px;text-align:center;padding-left:0;">FALSO</div>
<div class="c" style="left:551px;width:142px;letter-spacing:-0.16px;">20150813 13:19:54.077</div>
<div class="c" style="left:693px;width:142px;letter-spacing:-0.16px;">20150813 13:19:54.060</div>
<div class="c" style="left:835px;width:142px;letter-spacing:-0.16px;">20150813 13:19:54.060</div>
<div class="c" style="left:1079px;width:52px;letter-spacing:0px;">X</div>
<div class="c" style="left:1131px;width:73px;letter-spacing:-0.87px;">JURDOC</div>
<div class="c" style="left:1204px;width:276px;letter-spacing:0px;">0276-342.46.46</div>
<div class="c" style="left:1480px;width:200px;letter-spacing:0px;">0276-342.25.74</div>
<div class="tri" style="left:0"></div>
</div>
<div class="a row w" style="top:660px">
<div class="gv" style="left:65px"></div>
<div class="gv" style="left:247px"></div>
<div class="gv" style="left:307px"></div>
<div class="gv" style="left:390px"></div>
<div class="gv" style="left:473px"></div>
<div class="gv" style="left:550px"></div>
<div class="gv" style="left:692px"></div>
<div class="gv" style="left:834px"></div>
<div class="gv" style="left:976px"></div>
<div class="gv" style="left:1024px"></div>
<div class="gv" style="left:1078px"></div>
<div class="gv" style="left:1130px"></div>
<div class="gv" style="left:1203px"></div>
<div class="gv" style="left:1479px"></div>
<div class="gv" style="left:1679px"></div>
<div class="c" style="left:0px;width:66px;letter-spacing:0px;">0032</div>
<div class="c" style="left:66px;width:182px;letter-spacing:0.4px;">Nombre del Clientes 0032</div>
<div class="c" style="left:248px;width:60px;letter-spacing:0px;">A</div>
<div class="c" style="left:308px;width:83px;letter-spacing:-0.8px;">VERDADERO</div>
<div class="c" style="left:391px;width:83px;letter-spacing:-0.8px;">VERDADERO</div>
<div class="c" style="left:474px;width:77px;letter-spacing:-0.9px;text-align:center;padding-left:0;">FALSO</div>
<div class="c" style="left:551px;width:142px;letter-spacing:-0.16px;">20150813 13:19:54.077</div>
<div class="c" style="left:693px;width:142px;letter-spacing:-0.16px;">20150813 13:19:54.060</div>
<div class="c" style="left:835px;width:142px;letter-spacing:-0.16px;">20150813 13:19:54.060</div>
<div class="c" style="left:1079px;width:52px;letter-spacing:0px;">X</div>
<div class="c" style="left:1131px;width:73px;letter-spacing:-0.87px;">JURDOC</div>
<div class="c" style="left:1204px;width:276px;letter-spacing:0px;">0273-552.31.77/ 552.65.85</div>
<div class="tri" style="left:0"></div>
</div>
<div class="a row b" style="top:680px">
<div class="c" style="left:0px;width:66px;letter-spacing:0px;">0033</div>
<div class="c" style="left:66px;width:182px;letter-spacing:0.4px;">Nombre del Clientes 0033</div>
<div class="c" style="left:248px;width:60px;letter-spacing:0px;">A</div>
<div class="c" style="left:308px;width:83px;letter-spacing:-0.8px;">VERDADERO</div>
<div class="c" style="left:391px;width:83px;letter-spacing:-0.8px;">VERDADERO</div>
<div class="c" style="left:474px;width:77px;letter-spacing:-0.9px;text-align:center;padding-left:0;">FALSO</div>
<div class="c" style="left:551px;width:142px;letter-spacing:-0.16px;">20150813 13:19:54.077</div>
<div class="c" style="left:693px;width:142px;letter-spacing:-0.16px;">20150813 13:19:54.060</div>
<div class="c" style="left:835px;width:142px;letter-spacing:-0.16px;">20150813 13:19:54.060</div>
<div class="c" style="left:1079px;width:52px;letter-spacing:0px;">X</div>
<div class="c" style="left:1131px;width:73px;letter-spacing:-0.87px;">JURDOC</div>
<div class="c" style="left:1204px;width:276px;letter-spacing:0px;">0275-881.80.20</div>
<div class="tri" style="left:0"></div>
</div>
<div class="a row w" style="top:700px">
<div class="gv" style="left:65px"></div>
<div class="gv" style="left:247px"></div>
<div class="gv" style="left:307px"></div>
<div class="gv" style="left:390px"></div>
<div class="gv" style="left:473px"></div>
<div class="gv" style="left:550px"></div>
<div class="gv" style="left:692px"></div>
<div class="gv" style="left:834px"></div>
<div class="gv" style="left:976px"></div>
<div class="gv" style="left:1024px"></div>
<div class="gv" style="left:1078px"></div>
<div class="gv" style="left:1130px"></div>
<div class="gv" style="left:1203px"></div>
<div class="gv" style="left:1479px"></div>
<div class="gv" style="left:1679px"></div>
<div class="c" style="left:0px;width:66px;letter-spacing:0px;">0034</div>
<div class="c" style="left:66px;width:182px;letter-spacing:0.4px;">Nombre del Clientes 0034</div>
<div class="c" style="left:248px;width:60px;letter-spacing:0px;">A</div>
<div class="c" style="left:308px;width:83px;letter-spacing:-0.8px;">VERDADERO</div>
<div class="c" style="left:391px;width:83px;letter-spacing:-0.8px;">VERDADERO</div>
<div class="c" style="left:474px;width:77px;letter-spacing:-0.9px;text-align:center;padding-left:0;">FALSO</div>
<div class="c" style="left:551px;width:142px;letter-spacing:-0.16px;">20150813 13:19:54.077</div>
<div class="c" style="left:693px;width:142px;letter-spacing:-0.16px;">20150813 13:19:54.060</div>
<div class="c" style="left:835px;width:142px;letter-spacing:-0.16px;">20150813 13:19:54.060</div>
<div class="c" style="left:1079px;width:52px;letter-spacing:0px;">X</div>
<div class="c" style="left:1131px;width:73px;letter-spacing:-0.87px;">JURDOC</div>
<div class="c" style="left:1204px;width:276px;letter-spacing:0px;">0291-643.54.22</div>
<div class="tri" style="left:0"></div>
</div>
<div class="a row b" style="top:720px">
<div class="c" style="left:0px;width:66px;letter-spacing:0px;">0036</div>
<div class="c" style="left:66px;width:182px;letter-spacing:0.4px;">Nombre del Clientes 0036</div>
<div class="c" style="left:248px;width:60px;letter-spacing:0px;">A</div>
<div class="c" style="left:308px;width:83px;letter-spacing:-0.8px;">VERDADERO</div>
<div class="c" style="left:391px;width:83px;letter-spacing:-0.8px;">VERDADERO</div>
<div class="c" style="left:474px;width:77px;letter-spacing:-0.9px;text-align:center;padding-left:0;">FALSO</div>
<div class="c" style="left:551px;width:142px;letter-spacing:-0.16px;">20150813 13:19:54.077</div>
<div class="c" style="left:693px;width:142px;letter-spacing:-0.16px;">20150813 13:19:54.060</div>
<div class="c" style="left:835px;width:142px;letter-spacing:-0.16px;">20150813 13:19:54.060</div>
<div class="c" style="left:1079px;width:52px;letter-spacing:0px;">X</div>
<div class="c" style="left:1131px;width:73px;letter-spacing:-0.87px;">JURDOC</div>
<div class="c" style="left:1204px;width:276px;letter-spacing:0px;">0273-552.14.87</div>
<div class="tri" style="left:0"></div>
</div>
<div class="a row w" style="top:740px">
<div class="gv" style="left:65px"></div>
<div class="gv" style="left:247px"></div>
<div class="gv" style="left:307px"></div>
<div class="gv" style="left:390px"></div>
<div class="gv" style="left:473px"></div>
<div class="gv" style="left:550px"></div>
<div class="gv" style="left:692px"></div>
<div class="gv" style="left:834px"></div>
<div class="gv" style="left:976px"></div>
<div class="gv" style="left:1024px"></div>
<div class="gv" style="left:1078px"></div>
<div class="gv" style="left:1130px"></div>
<div class="gv" style="left:1203px"></div>
<div class="gv" style="left:1479px"></div>
<div class="gv" style="left:1679px"></div>
<div class="c" style="left:0px;width:66px;letter-spacing:0px;">0037</div>
<div class="c" style="left:66px;width:182px;letter-spacing:0.4px;">Nombre del Clientes 0037</div>
<div class="c" style="left:248px;width:60px;letter-spacing:0px;">A</div>
<div class="c" style="left:308px;width:83px;letter-spacing:-0.8px;">VERDADERO</div>
<div class="c" style="left:391px;width:83px;letter-spacing:-0.8px;">VERDADERO</div>
<div class="c" style="left:474px;width:77px;letter-spacing:-0.9px;text-align:center;padding-left:0;">FALSO</div>
<div class="c" style="left:551px;width:142px;letter-spacing:-0.16px;">20150813 13:19:54.077</div>
<div class="c" style="left:693px;width:142px;letter-spacing:-0.16px;">20150813 13:19:54.060</div>
<div class="c" style="left:835px;width:142px;letter-spacing:-0.16px;">20150813 13:19:54.060</div>
<div class="c" style="left:1079px;width:52px;letter-spacing:0px;">X</div>
<div class="c" style="left:1131px;width:73px;letter-spacing:-0.87px;">JURDOC</div>
<div class="c" style="left:1204px;width:276px;letter-spacing:0px;">0286-952.02.18&nbsp; ext3 ventas</div>
<div class="c" style="left:1680px;width:193px;letter-spacing:0px;">EXT 2</div>
<div class="tri" style="left:0"></div>
</div>
<div class="a row b" style="top:760px">
<div class="c" style="left:0px;width:66px;letter-spacing:0px;">0038</div>
<div class="c" style="left:66px;width:182px;letter-spacing:0.4px;">Nombre del Clientes 0038</div>
<div class="c" style="left:248px;width:60px;letter-spacing:0px;">A</div>
<div class="c" style="left:308px;width:83px;letter-spacing:-0.8px;">VERDADERO</div>
<div class="c" style="left:391px;width:83px;letter-spacing:-0.8px;">VERDADERO</div>
<div class="c" style="left:474px;width:77px;letter-spacing:-0.9px;text-align:center;padding-left:0;">FALSO</div>
<div class="c" style="left:551px;width:142px;letter-spacing:-0.16px;">20150813 13:19:54.077</div>
<div class="c" style="left:693px;width:142px;letter-spacing:-0.16px;">20150813 13:19:54.060</div>
<div class="c" style="left:835px;width:142px;letter-spacing:-0.16px;">20150813 13:19:54.060</div>
<div class="c" style="left:1079px;width:52px;letter-spacing:0px;">X</div>
<div class="c" style="left:1131px;width:73px;letter-spacing:-0.87px;">JURDOC</div>
<div class="c" style="left:1204px;width:276px;letter-spacing:0px;">0243-551.35.07</div>
<div class="tri" style="left:0"></div>
</div>
<div class="a row w" style="top:780px">
<div class="gv" style="left:65px"></div>
<div class="gv" style="left:247px"></div>
<div class="gv" style="left:307px"></div>
<div class="gv" style="left:390px"></div>
<div class="gv" style="left:473px"></div>
<div class="gv" style="left:550px"></div>
<div class="gv" style="left:692px"></div>
<div class="gv" style="left:834px"></div>
<div class="gv" style="left:976px"></div>
<div class="gv" style="left:1024px"></div>
<div class="gv" style="left:1078px"></div>
<div class="gv" style="left:1130px"></div>
<div class="gv" style="left:1203px"></div>
<div class="gv" style="left:1479px"></div>
<div class="gv" style="left:1679px"></div>
<div class="c" style="left:0px;width:66px;letter-spacing:0px;">0039</div>
<div class="c" style="left:66px;width:182px;letter-spacing:0.4px;">Nombre del Clientes 0039</div>
<div class="c" style="left:248px;width:60px;letter-spacing:0px;">A</div>
<div class="c" style="left:308px;width:83px;letter-spacing:-0.8px;">VERDADERO</div>
<div class="c" style="left:391px;width:83px;letter-spacing:-0.8px;">VERDADERO</div>
<div class="c" style="left:474px;width:77px;letter-spacing:-0.9px;text-align:center;padding-left:0;">FALSO</div>
<div class="c" style="left:551px;width:142px;letter-spacing:-0.16px;">20150813 13:19:54.077</div>
<div class="c" style="left:693px;width:142px;letter-spacing:-0.16px;">20150813 13:19:54.060</div>
<div class="c" style="left:835px;width:142px;letter-spacing:-0.16px;">20150813 13:19:54.060</div>
<div class="c" style="left:1079px;width:52px;letter-spacing:0px;">X</div>
<div class="c" style="left:1131px;width:73px;letter-spacing:-0.87px;">NATRES</div>
<div class="c" style="left:1204px;width:276px;letter-spacing:0px;">0277-541.0656</div>
<div class="tri" style="left:0"></div>
</div>
<div class="a row b" style="top:800px">
<div class="c" style="left:0px;width:66px;letter-spacing:0px;">0040</div>
<div class="c" style="left:66px;width:182px;letter-spacing:0.4px;">Nombre del Clientes 0040</div>
<div class="c" style="left:248px;width:60px;letter-spacing:0px;">A</div>
<div class="c" style="left:308px;width:83px;letter-spacing:-0.8px;">VERDADERO</div>
<div class="c" style="left:391px;width:83px;letter-spacing:-0.8px;">VERDADERO</div>
<div class="c" style="left:474px;width:77px;letter-spacing:-0.9px;text-align:center;padding-left:0;">FALSO</div>
<div class="c" style="left:551px;width:142px;letter-spacing:-0.16px;">20150813 13:19:54.077</div>
<div class="c" style="left:693px;width:142px;letter-spacing:-0.16px;">20150813 13:19:54.060</div>
<div class="c" style="left:835px;width:142px;letter-spacing:-0.16px;">20150813 13:19:54.060</div>
<div class="c" style="left:1079px;width:52px;letter-spacing:0px;">X</div>
<div class="c" style="left:1131px;width:73px;letter-spacing:-0.87px;">JURDOC</div>
<div class="tri" style="left:0"></div>
</div>
<div class="a row w" style="top:820px">
<div class="gv" style="left:65px"></div>
<div class="gv" style="left:247px"></div>
<div class="gv" style="left:307px"></div>
<div class="gv" style="left:390px"></div>
<div class="gv" style="left:473px"></div>
<div class="gv" style="left:550px"></div>
<div class="gv" style="left:692px"></div>
<div class="gv" style="left:834px"></div>
<div class="gv" style="left:976px"></div>
<div class="gv" style="left:1024px"></div>
<div class="gv" style="left:1078px"></div>
<div class="gv" style="left:1130px"></div>
<div class="gv" style="left:1203px"></div>
<div class="gv" style="left:1479px"></div>
<div class="gv" style="left:1679px"></div>
<div class="c" style="left:0px;width:66px;letter-spacing:0px;">0041</div>
<div class="c" style="left:66px;width:182px;letter-spacing:0.4px;">Nombre del Clientes 0041</div>
<div class="c" style="left:248px;width:60px;letter-spacing:0px;">A</div>
<div class="c" style="left:308px;width:83px;letter-spacing:-0.8px;">VERDADERO</div>
<div class="c" style="left:391px;width:83px;letter-spacing:-0.8px;">VERDADERO</div>
<div class="c" style="left:474px;width:77px;letter-spacing:-0.9px;text-align:center;padding-left:0;">FALSO</div>
<div class="c" style="left:551px;width:142px;letter-spacing:-0.16px;">20150813 13:19:54.077</div>
<div class="c" style="left:693px;width:142px;letter-spacing:-0.16px;">20150813 13:19:54.060</div>
<div class="c" style="left:835px;width:142px;letter-spacing:-0.16px;">20150813 13:19:54.060</div>
<div class="c" style="left:1079px;width:52px;letter-spacing:0px;">X</div>
<div class="c" style="left:1131px;width:73px;letter-spacing:-0.87px;">JURDOC</div>
<div class="c" style="left:1204px;width:276px;letter-spacing:0px;">(0274)263.14.06/0414.153.54.56</div>
<div class="tri" style="left:0"></div>
</div>
<div class="a" style="left:24px;top:20px;width:65px;height:19px;border:1px solid #fff"></div>
<div class="a" style="left:22px;top:18px;width:69px;height:23px;border:2px solid #217346"></div>
<div class="a" style="left:86px;top:36px;width:7px;height:7px;background:#217346;border:1px solid #fff"></div>
<div class="a" style="left:1900px;top:34px;width:15px;height:777px;background:#dadada"></div>
<div class="a" style="left:1896px;top:20px;width:1px;height:806px;background:#a6a6a6"></div>
<div class="a" style="left:1900px;top:2px;width:15px;height:15px;background:#fff;border:1px solid #ababab"></div>
<svg class="a" style="left:1903px;top:7px" width="9" height="5"><path d="M0 4.5h8L4 0.5z" fill="#5a5a5a"/></svg>
<div class="a" style="left:1900px;top:17px;width:15px;height:17px;background:#fff;border:1px solid #ababab"></div>
<div class="a" style="left:1900px;top:812px;width:15px;height:15px;background:#fff;border:1px solid #ababab"></div>
<svg class="a" style="left:1903px;top:817px" width="9" height="5"><path d="M0 0.5h8L4 4.5z" fill="#5a5a5a"/></svg>
</div>
<div class="a" style="left:0;top:1027px;width:1918px;height:29px;background:#e6e6e6;border-bottom:1px solid #d0d0d0"></div>
<div class="a" style="left:0;top:1027px;width:1897px;height:1px;background:#a6a6a6"></div>
<svg class="a" style="left:22px;top:1035px" width="40" height="12"><path d="M7 2v7L3.5 5.5z" fill="#c6c6c6"/><path d="M29 2v7l3.5-3.5z" fill="#c6c6c6"/></svg>
<div class="a" style="left:98px;top:1027px;width:60px;height:25px;background:#fff;border-bottom:2px solid #217346;border-left:1px solid #c6c6c6;border-right:1px solid #c6c6c6"></div>
<div class="a" style="left:110px;top:1033px;font-size:13px;line-height:15px;font-weight:bold;color:#217346">Hoja1</div>
<svg class="a" style="left:190px;top:1032px" width="18" height="18" viewBox="0 0 18 18"><circle cx="9" cy="9" r="7.5" fill="none" stroke="#777" stroke-width="1.1"/><path d="M9 5v8M5 9h8" stroke="#777" stroke-width="1.4"/></svg>
<svg class="a" style="left:1149px;top:1034px" width="4" height="14"><circle cx="2" cy="2" r="1" fill="#999"/><circle cx="2" cy="7" r="1" fill="#999"/><circle cx="2" cy="12" r="1" fill="#999"/></svg>
<div class="a" style="left:1167px;top:1034px;width:730px;height:15px;background:#dadada"></div>
<div class="a" style="left:1167px;top:1034px;width:15px;height:15px;background:#fff;border:1px solid #ababab"></div>
<svg class="a" style="left:1172px;top:1038px" width="5" height="8"><path d="M4.5 0v7.5L0.5 3.75z" fill="#5a5a5a"/></svg>
<div class="a" style="left:1182px;top:1034px;width:83px;height:15px;background:#fff;border:1px solid #ababab"></div>
<div class="a" style="left:1882px;top:1034px;width:15px;height:15px;background:#fff;border:1px solid #ababab"></div>
<svg class="a" style="left:1887px;top:1038px" width="5" height="8"><path d="M0.5 0v7.5l4-3.75z" fill="#5a5a5a"/></svg>
<div class="a" style="left:0;top:1056px;width:1918px;height:22px;background:#f3f3f3"></div>
<div class="a t" style="left:5px;top:1059px;color:#333;font-size:11.5px">Listo</div>
<div class="a" style="left:1629px;top:1056px;width:38px;height:22px;background:#c6c6c6"></div>
<svg class="a" style="left:1640px;top:1058px" width="100" height="16" viewBox="0 0 100 16"><rect x="0.5" y="1.5" width="13" height="12" fill="none" stroke="#555"/><path d="M0.5 5.5h13M0.5 9.5h13M4.5 1.5v12M9.5 1.5v12" stroke="#555"/><rect x="39.5" y="1.5" width="13" height="12" fill="none" stroke="#555"/><rect x="42.5" y="4.5" width="7" height="6" fill="none" stroke="#555"/><rect x="77.5" y="1.5" width="13" height="12" fill="none" stroke="#555"/><path d="M77.5 8.5h13M84 1.5v7" stroke="#555"/></svg>
<svg class="a" style="left:1744px;top:1058px" width="130" height="16" viewBox="0 0 130 16"><path d="M3 7.5h7" stroke="#444" stroke-width="1.6"/><path d="M17 7.5h95" stroke="#aaa"/><rect x="61" y="2" width="5" height="11" fill="#555"/><path d="M116 7.5h8M120 3.5v8" stroke="#444" stroke-width="1.6"/></svg>
<div class="a t" style="left:1880px;top:1058px;color:#333;font-size:11.5px;letter-spacing:-0.3px">100 %</div>
</body></html>
